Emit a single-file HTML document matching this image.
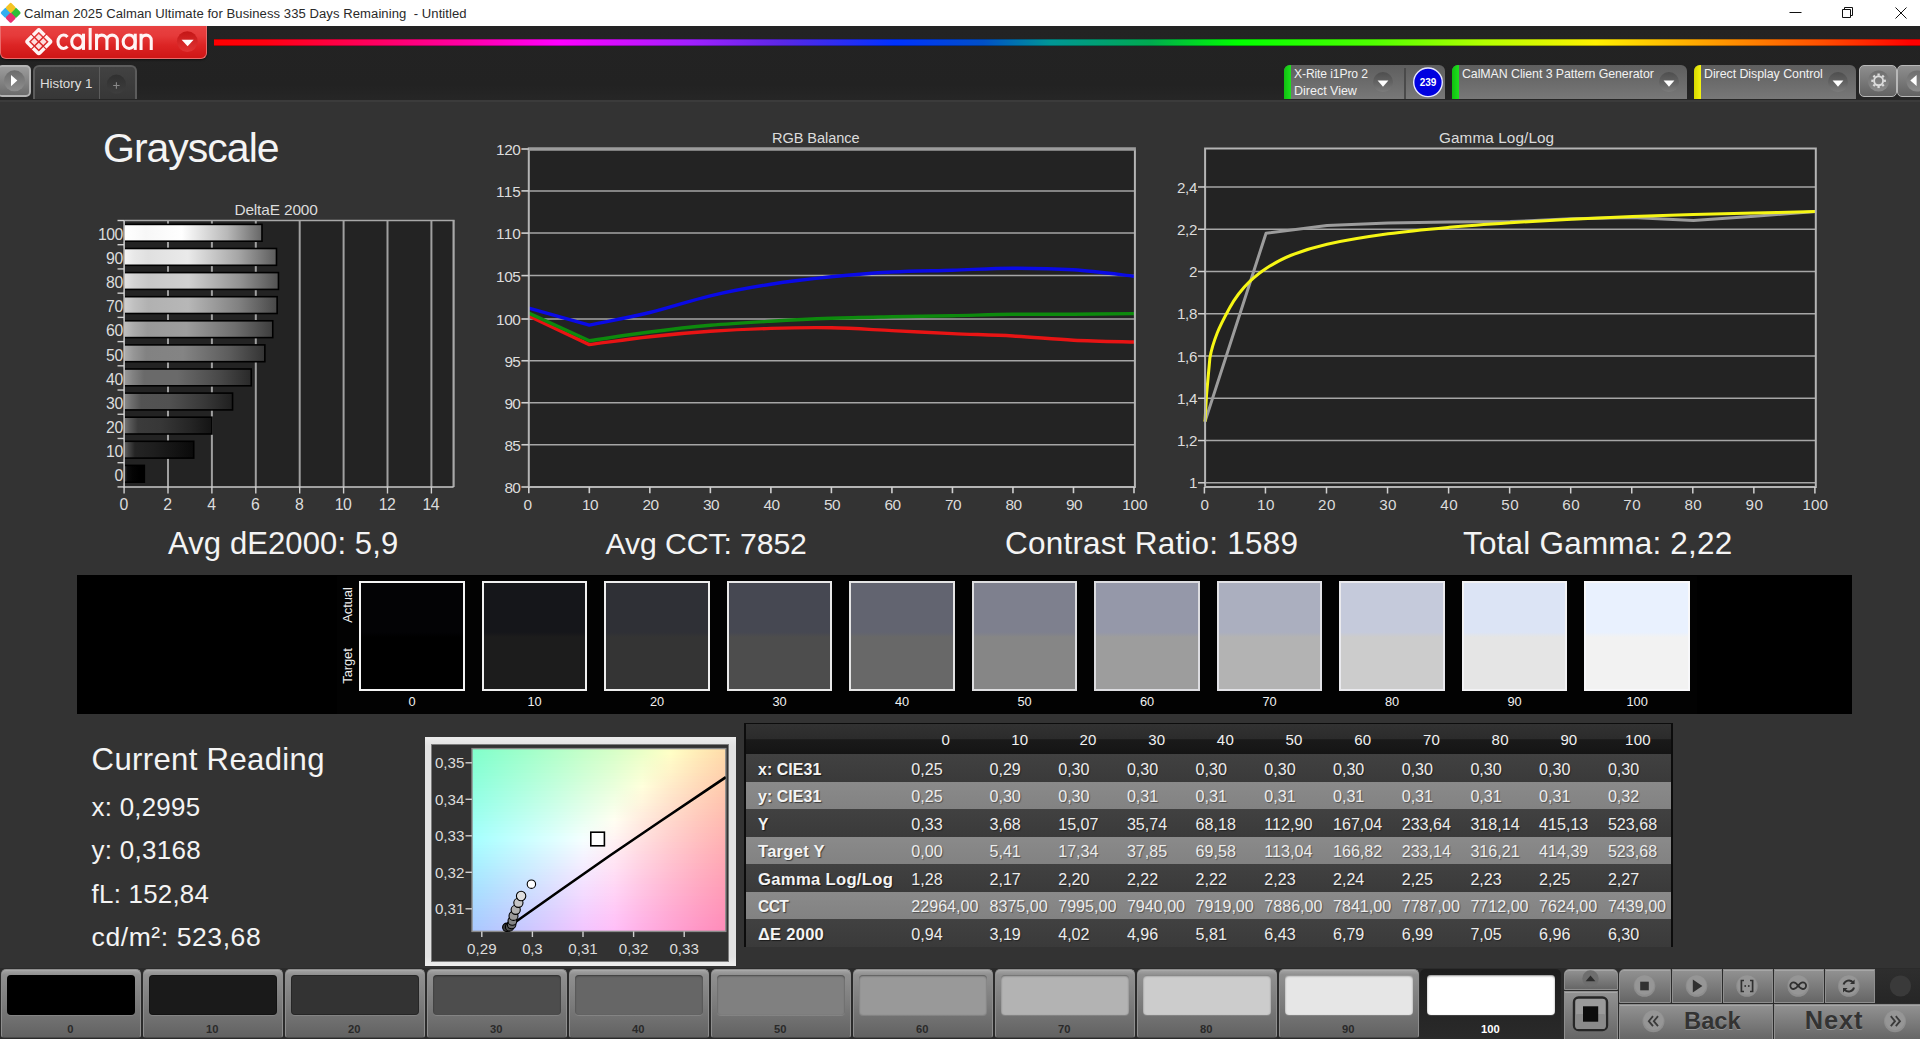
<!DOCTYPE html>
<html><head><meta charset="utf-8"><title>Calman</title>
<style>
html,body{margin:0;padding:0;overflow:hidden;}
html{width:1920px;height:1039px;}
body{width:1920px;height:1039px;overflow:hidden;background:#333;position:relative;font-family:"Liberation Sans",sans-serif;}
.t{position:absolute;white-space:pre;line-height:1;}
.b{position:absolute;box-sizing:border-box;}
svg{position:absolute;left:0;top:0;overflow:visible;}
</style></head><body>

<div class="b" style="left:0px;top:0px;width:1920px;height:26px;background:#fff;"></div>
<svg width="24" height="26"><g transform="translate(10.7,12.8)"><rect x="-3.9" y="-3.9" width="7.8" height="7.8" rx="1.6" transform="translate(-5.0,0) rotate(45)" fill="#32aef0"/><rect x="-3.9" y="-3.9" width="7.8" height="7.8" rx="1.6" transform="translate(5.0,0) rotate(45)" fill="#2fbe38"/><rect x="-3.9" y="-3.9" width="7.8" height="7.8" rx="1.6" transform="translate(0,5.0) rotate(45)" fill="#e8306e"/><rect x="-3.9" y="-3.9" width="7.8" height="7.8" rx="1.6" transform="translate(0,-5.0) rotate(45)" fill="#f4c424"/></g></svg>
<span class="t" style="left:24.00px;top:6px;line-height:15px;font-size:13.09px;color:#2a2a2a;letter-spacing:0.061px;">Calman 2025 Calman Ultimate for Business 335 Days Remaining  - Untitled</span>
<svg width="1920" height="26"><g stroke="#111" stroke-width="1" fill="none"><path d="M1789.5 12.5H1801.5"/><path d="M1842.5 9.5h8v8h-8z M1844.5 9.5v-2h8v8h-2"/><path d="M1895.5 7.5l11 11M1906.5 7.5l-11 11"/></g></svg>
<div class="b" style="left:0px;top:26px;width:1920px;height:74px;background:linear-gradient(#232323,#222 80%,#262626);"></div>
<div class="b" style="left:0px;top:100px;width:1920px;height:1.5px;background:#3b3b3b;"></div>
<div class="b" style="left:0px;top:26px;width:206.8px;height:33.2px;background:linear-gradient(#e84242 0%,#e63a3a 30%,#dc2424 60%,#d01616 100%);border-radius:0 0 6px 6px;border:1px solid #ea6a6a;border-top:none;box-shadow:0 1px 2px rgba(0,0,0,.6);"></div>
<svg width="210" height="60"><g transform="translate(38.8,41.7) rotate(45)"><rect x="-8.65" y="-8.65" width="17.3" height="17.3" rx="1.3" fill="none" stroke="#fff4f4" stroke-width="3.5"/><path d="M-11.5 0H11.5M0 -11.5V11.5" stroke="#d92626" stroke-width="1.2"/><rect x="-5.5" y="-5.5" width="4.75" height="4.75" fill="#ffdede"/><rect x="0.75" y="-5.5" width="4.75" height="4.75" fill="#ffdede"/><rect x="-5.5" y="0.75" width="4.75" height="4.75" fill="#ffdede"/><rect x="0.75" y="0.75" width="4.75" height="4.75" fill="#ffdede"/></g><g fill="none" stroke="#fff4f4" stroke-width="3.05"><path d="M67.5 37.0A5.6 6.75 0 1 0 67.5 46.6"/><ellipse cx="77.45" cy="41.8" rx="5.75" ry="6.75"/><path d="M83.45 33.7V49.9"/><path d="M90.15 28V49.9"/><path d="M96.55 49.9V33.7M96.55 40.3A5.2 5.2 0 0 1 106.95 40.3V49.9M106.95 40.3A5.2 5.2 0 0 1 117.35 40.3V49.9"/><ellipse cx="129.15" cy="41.8" rx="6.0" ry="6.75"/><path d="M135.25 33.7V49.9"/><path d="M141.05 49.9V33.7M141.05 40.2A5.1 5.1 0 0 1 151.25 40.2V49.9"/></g><defs><linearGradient id="ddr" x1="0" x2="0" y1="0" y2="1"><stop offset="0" stop-color="#c41616"/><stop offset="1" stop-color="#e23434"/></linearGradient></defs><circle cx="187.3" cy="41.6" r="10.4" fill="url(#ddr)"/><path d="M181.6 39.8h12l-6 6.4z" fill="#fff"/></svg>
<div class="b" style="left:214px;top:39px;width:1706px;height:7px;background:linear-gradient(90deg,#ff0000 0%,#ff0010 3%,#ff0064 9.7%,#ff00aa 15%,#ff00ff 20.2%,#a020ff 28%,#5a28e6 33.3%,#0032ff 39.9%,#0050c8 45.1%,#009696 49%,#00aa50 54.9%,#00ff00 60%,#50ff00 68%,#b4ff00 74.5%,#fff000 81%,#ffa000 87.6%,#ff5000 94.2%,#ff0000 99.5%);"></div>
<div class="b" style="left:214px;top:39px;width:1706px;height:1px;background:rgba(0,0,0,.25);"></div>
<div class="b" style="left:214px;top:45px;width:1706px;height:1px;background:rgba(0,0,0,.3);"></div>
<div class="b" style="left:-3px;top:65px;width:33.8px;height:31.8px;background:linear-gradient(#9c9c9c,#6c6c6c);border:2px solid #b4b4b4;border-radius:5px;"></div>
<svg width="40" height="100"><defs><linearGradient id="plg" x1="0" x2="0" y1="0" y2="1"><stop offset="0" stop-color="#6c6c6c"/><stop offset="1" stop-color="#8e8e8e"/></linearGradient></defs><circle cx="14.5" cy="80.8" r="10.5" fill="url(#plg)"/><path d="M11 74.9v11.3l6.3-5.65z" fill="#fff"/></svg>
<div class="b" style="left:33px;top:65px;width:104px;height:34.2px;background:linear-gradient(#424242,#373737);border:2px solid #5c5c5c;border-bottom:none;border-radius:6px 6px 0 0;"></div>
<div class="b" style="left:98.6px;top:66px;width:1.6px;height:33px;background:#5c5c5c;"></div>
<span class="t" style="left:40.00px;top:76px;line-height:15px;font-size:13.39px;color:#dedede;letter-spacing:-0.043px;">History 1</span>
<svg width="140" height="100"><defs><linearGradient id="pcg" x1="0" x2="0" y1="0" y2="1"><stop offset="0" stop-color="#303030"/><stop offset="1" stop-color="#3e3e3e"/></linearGradient></defs><circle cx="116.4" cy="84.2" r="9.6" fill="url(#pcg)"/><path d="M113.2 85.5h6.4M116.4 82.3v6.4" stroke="#8a8a8a" stroke-width="1.1"/></svg>
<div class="b" style="left:1284px;top:65px;width:161px;height:33.8px;background:linear-gradient(#5e5e5e,#787878);border-radius:6px 6px 0 0;"></div>
<div class="b" style="left:1284px;top:65px;width:7px;height:33.8px;background:linear-gradient(90deg,#10c010,#1ee01e);border-radius:6px 0 0 0;"></div>
<div class="b" style="left:1404px;top:68px;width:1.5px;height:31.3px;background:#4a4a4a;"></div>
<span class="t" style="left:1294.00px;top:67px;line-height:14px;font-size:12.10px;color:#f2f2f2;letter-spacing:-0.100px;">X-Rite i1Pro 2</span>
<span class="t" style="left:1294.00px;top:84px;line-height:14px;font-size:12.53px;color:#f2f2f2;letter-spacing:-0.015px;">Direct View</span>
<svg width="1920" height="110"><defs><linearGradient id="ddg" x1="0" x2="0" y1="0" y2="1"><stop offset="0" stop-color="#4e4e4e"/><stop offset="0.55" stop-color="#646464"/><stop offset="1" stop-color="#7c7c7c"/></linearGradient></defs><circle cx="1383" cy="82.1" r="10" fill="url(#ddg)"/><path d="M1377.6 80.6h10.8l-5.4 6.1z" fill="#fff"/></svg>
<svg width="1920" height="110"><circle cx="1428" cy="82.3" r="14.3" fill="#0000e0" stroke="#e8e8ff" stroke-width="1.4"/></svg>
<span class="t" style="left:1419.66px;top:77px;line-height:11px;font-size:10.00px;color:#fff;font-weight:700;">239</span>
<div class="b" style="left:1452px;top:65px;width:235px;height:33.8px;background:linear-gradient(#5e5e5e,#787878);border-radius:6px 6px 0 0;"></div>
<div class="b" style="left:1452px;top:65px;width:7px;height:33.8px;background:linear-gradient(90deg,#10c010,#1ee01e);border-radius:6px 0 0 0;"></div>
<span class="t" style="left:1462.00px;top:67px;line-height:14px;font-size:12.35px;color:#f2f2f2;letter-spacing:-0.051px;">CalMAN Client 3 Pattern Generator</span>
<svg width="1920" height="110"><defs><linearGradient id="ddg" x1="0" x2="0" y1="0" y2="1"><stop offset="0" stop-color="#4e4e4e"/><stop offset="0.55" stop-color="#646464"/><stop offset="1" stop-color="#7c7c7c"/></linearGradient></defs><circle cx="1669" cy="82.1" r="10" fill="url(#ddg)"/><path d="M1663.6 80.6h10.8l-5.4 6.1z" fill="#fff"/></svg>
<div class="b" style="left:1694px;top:65px;width:162px;height:33.8px;background:linear-gradient(#5e5e5e,#787878);border-radius:6px 6px 0 0;"></div>
<div class="b" style="left:1694px;top:65px;width:7px;height:33.8px;background:linear-gradient(90deg,#d8d800,#f4f410);border-radius:6px 0 0 0;"></div>
<span class="t" style="left:1704.00px;top:67px;line-height:14px;font-size:12.39px;color:#f2f2f2;letter-spacing:-0.040px;">Direct Display Control</span>
<svg width="1920" height="110"><defs><linearGradient id="ddg" x1="0" x2="0" y1="0" y2="1"><stop offset="0" stop-color="#4e4e4e"/><stop offset="0.55" stop-color="#646464"/><stop offset="1" stop-color="#7c7c7c"/></linearGradient></defs><circle cx="1838" cy="82.1" r="10" fill="url(#ddg)"/><path d="M1832.6 80.6h10.8l-5.4 6.1z" fill="#fff"/></svg>
<div class="b" style="left:1859px;top:64.8px;width:38px;height:32.4px;background:linear-gradient(#8e8e8e,#636363);border:1.5px solid #b8b8b8;border-radius:5px;"></div>
<div class="b" style="left:1897px;top:64.8px;width:38px;height:32.4px;background:linear-gradient(#8e8e8e,#636363);border:1.5px solid #b8b8b8;border-radius:5px;"></div>
<svg width="1920" height="110"><defs><linearGradient id="gcg" x1="0" x2="0" y1="0" y2="1"><stop offset="0" stop-color="#6e6e6e"/><stop offset="1" stop-color="#8c8c8c"/></linearGradient></defs><circle cx="1878.6" cy="81" r="10.6" fill="url(#gcg)"/><circle cx="1917" cy="81" r="10.6" fill="url(#gcg)"/><g transform="translate(1878.6,80.8)" fill="none" stroke="#dcdcdc"><circle r="4.5" stroke-width="1.9"/><path d="M0 -5.2V-7.3" stroke-width="2.3" transform="rotate(0)"/><path d="M0 -5.2V-7.3" stroke-width="2.3" transform="rotate(45)"/><path d="M0 -5.2V-7.3" stroke-width="2.3" transform="rotate(90)"/><path d="M0 -5.2V-7.3" stroke-width="2.3" transform="rotate(135)"/><path d="M0 -5.2V-7.3" stroke-width="2.3" transform="rotate(180)"/><path d="M0 -5.2V-7.3" stroke-width="2.3" transform="rotate(225)"/><path d="M0 -5.2V-7.3" stroke-width="2.3" transform="rotate(270)"/><path d="M0 -5.2V-7.3" stroke-width="2.3" transform="rotate(315)"/></g><path d="M1916.6 74.9v11.2l-6.3-5.6z" fill="#fff"/></svg>
<span class="t" style="left:234.40px;top:201px;line-height:17px;font-size:15.41px;color:#dcdcdc;letter-spacing:-0.134px;">DeltaE 2000</span>
<svg width="1920" height="1039"><defs><linearGradient id="bg0" x1="0" x2="1" y1="0" y2="0"><stop offset="0" stop-color="#ffffff"/><stop offset="0.07" stop-color="#fcfcfc"/><stop offset="0.16" stop-color="#f7f7f7"/><stop offset="0.42" stop-color="#ffffff"/><stop offset="0.75" stop-color="#b8b8b8"/><stop offset="1" stop-color="#666666"/></linearGradient><linearGradient id="bg1" x1="0" x2="1" y1="0" y2="0"><stop offset="0" stop-color="#f5f5f5"/><stop offset="0.07" stop-color="#e8e8e8"/><stop offset="0.16" stop-color="#e0e0e0"/><stop offset="0.42" stop-color="#eaeaea"/><stop offset="0.75" stop-color="#a6a6a6"/><stop offset="1" stop-color="#5c5c5c"/></linearGradient><linearGradient id="bg2" x1="0" x2="1" y1="0" y2="0"><stop offset="0" stop-color="#e3e3e3"/><stop offset="0.07" stop-color="#d3d3d3"/><stop offset="0.16" stop-color="#c8c8c8"/><stop offset="0.42" stop-color="#d0d0d0"/><stop offset="0.75" stop-color="#939393"/><stop offset="1" stop-color="#525252"/></linearGradient><linearGradient id="bg3" x1="0" x2="1" y1="0" y2="0"><stop offset="0" stop-color="#d1d1d1"/><stop offset="0.07" stop-color="#bfbfbf"/><stop offset="0.16" stop-color="#b1b1b1"/><stop offset="0.42" stop-color="#b7b7b7"/><stop offset="0.75" stop-color="#818181"/><stop offset="1" stop-color="#484848"/></linearGradient><linearGradient id="bg4" x1="0" x2="1" y1="0" y2="0"><stop offset="0" stop-color="#bfbfbf"/><stop offset="0.07" stop-color="#aaaaaa"/><stop offset="0.16" stop-color="#999999"/><stop offset="0.42" stop-color="#9d9d9d"/><stop offset="0.75" stop-color="#6e6e6e"/><stop offset="1" stop-color="#3d3d3d"/></linearGradient><linearGradient id="bg5" x1="0" x2="1" y1="0" y2="0"><stop offset="0" stop-color="#aeaeae"/><stop offset="0.07" stop-color="#969696"/><stop offset="0.16" stop-color="#828282"/><stop offset="0.42" stop-color="#848484"/><stop offset="0.75" stop-color="#5c5c5c"/><stop offset="1" stop-color="#333333"/></linearGradient><linearGradient id="bg6" x1="0" x2="1" y1="0" y2="0"><stop offset="0" stop-color="#9b9b9b"/><stop offset="0.07" stop-color="#828282"/><stop offset="0.16" stop-color="#6a6a6a"/><stop offset="0.42" stop-color="#6a6a6a"/><stop offset="0.75" stop-color="#494949"/><stop offset="1" stop-color="#292929"/></linearGradient><linearGradient id="bg7" x1="0" x2="1" y1="0" y2="0"><stop offset="0" stop-color="#8a8a8a"/><stop offset="0.07" stop-color="#6e6e6e"/><stop offset="0.16" stop-color="#535353"/><stop offset="0.42" stop-color="#515151"/><stop offset="0.75" stop-color="#373737"/><stop offset="1" stop-color="#1f1f1f"/></linearGradient><linearGradient id="bg8" x1="0" x2="1" y1="0" y2="0"><stop offset="0" stop-color="#787878"/><stop offset="0.07" stop-color="#595959"/><stop offset="0.16" stop-color="#3b3b3b"/><stop offset="0.42" stop-color="#373737"/><stop offset="0.75" stop-color="#252525"/><stop offset="1" stop-color="#141414"/></linearGradient><linearGradient id="bg9" x1="0" x2="1" y1="0" y2="0"><stop offset="0" stop-color="#666666"/><stop offset="0.07" stop-color="#454545"/><stop offset="0.16" stop-color="#242424"/><stop offset="0.42" stop-color="#1e1e1e"/><stop offset="0.75" stop-color="#131313"/><stop offset="1" stop-color="#0a0a0a"/></linearGradient><linearGradient id="bg10" x1="0" x2="1" y1="0" y2="0"><stop offset="0" stop-color="#545454"/><stop offset="0.07" stop-color="#303030"/><stop offset="0.16" stop-color="#0c0c0c"/><stop offset="0.42" stop-color="#040404"/><stop offset="0.75" stop-color="#000000"/><stop offset="1" stop-color="#000000"/></linearGradient></defs><rect x="124.1" y="220.5" width="329.5" height="266.5" fill="#232323"/><path d="M168.00 220.5V487.0" stroke="#a0a0a0" stroke-width="2"/><path d="M211.90 220.5V487.0" stroke="#a0a0a0" stroke-width="2"/><path d="M255.80 220.5V487.0" stroke="#a0a0a0" stroke-width="2"/><path d="M299.70 220.5V487.0" stroke="#a0a0a0" stroke-width="2"/><path d="M343.60 220.5V487.0" stroke="#a0a0a0" stroke-width="2"/><path d="M387.50 220.5V487.0" stroke="#a0a0a0" stroke-width="2"/><path d="M431.40 220.5V487.0" stroke="#a0a0a0" stroke-width="2"/><rect x="123.69999999999999" y="224.40" width="138.28" height="16.8" fill="url(#bg0)" stroke="#000" stroke-width="1.6"/><rect x="123.69999999999999" y="248.50" width="152.77" height="16.8" fill="url(#bg1)" stroke="#000" stroke-width="1.6"/><rect x="123.69999999999999" y="272.60" width="154.75" height="16.8" fill="url(#bg2)" stroke="#000" stroke-width="1.6"/><rect x="123.69999999999999" y="296.70" width="153.43" height="16.8" fill="url(#bg3)" stroke="#000" stroke-width="1.6"/><rect x="123.69999999999999" y="320.80" width="149.04" height="16.8" fill="url(#bg4)" stroke="#000" stroke-width="1.6"/><rect x="123.69999999999999" y="344.90" width="141.14" height="16.8" fill="url(#bg5)" stroke="#000" stroke-width="1.6"/><rect x="123.69999999999999" y="369.00" width="127.53" height="16.8" fill="url(#bg6)" stroke="#000" stroke-width="1.6"/><rect x="123.69999999999999" y="393.10" width="108.87" height="16.8" fill="url(#bg7)" stroke="#000" stroke-width="1.6"/><rect x="123.69999999999999" y="417.20" width="88.24" height="16.8" fill="url(#bg8)" stroke="#000" stroke-width="1.6"/><rect x="123.69999999999999" y="441.30" width="70.02" height="16.8" fill="url(#bg9)" stroke="#000" stroke-width="1.6"/><rect x="123.69999999999999" y="465.40" width="20.63" height="16.8" fill="url(#bg10)" stroke="#000" stroke-width="1.6"/><path d="M124.1 220.5H454.6" stroke="#a8a8a8" stroke-width="1.5" fill="none"/><path d="M453.6 220.5V487.0" stroke="#a8a8a8" stroke-width="2.2" fill="none"/><path d="M124.1 220.5V487.0H453.6" stroke="#c8c8c8" stroke-width="1.6" fill="none"/><path d="M117.5 220.50H124.1" stroke="#d0d0d0" stroke-width="1.4"/><path d="M117.5 244.72H124.1" stroke="#d0d0d0" stroke-width="1.4"/><path d="M117.5 268.94H124.1" stroke="#d0d0d0" stroke-width="1.4"/><path d="M117.5 293.16H124.1" stroke="#d0d0d0" stroke-width="1.4"/><path d="M117.5 317.38H124.1" stroke="#d0d0d0" stroke-width="1.4"/><path d="M117.5 341.60H124.1" stroke="#d0d0d0" stroke-width="1.4"/><path d="M117.5 365.82H124.1" stroke="#d0d0d0" stroke-width="1.4"/><path d="M117.5 390.04H124.1" stroke="#d0d0d0" stroke-width="1.4"/><path d="M117.5 414.26H124.1" stroke="#d0d0d0" stroke-width="1.4"/><path d="M117.5 438.48H124.1" stroke="#d0d0d0" stroke-width="1.4"/><path d="M117.5 462.70H124.1" stroke="#d0d0d0" stroke-width="1.4"/><path d="M117.5 486.92H124.1" stroke="#d0d0d0" stroke-width="1.4"/><path d="M124.10 487.0V493.5" stroke="#d0d0d0" stroke-width="1.4"/><path d="M168.00 487.0V493.5" stroke="#d0d0d0" stroke-width="1.4"/><path d="M211.90 487.0V493.5" stroke="#d0d0d0" stroke-width="1.4"/><path d="M255.80 487.0V493.5" stroke="#d0d0d0" stroke-width="1.4"/><path d="M299.70 487.0V493.5" stroke="#d0d0d0" stroke-width="1.4"/><path d="M343.60 487.0V493.5" stroke="#d0d0d0" stroke-width="1.4"/><path d="M387.50 487.0V493.5" stroke="#d0d0d0" stroke-width="1.4"/><path d="M431.40 487.0V493.5" stroke="#d0d0d0" stroke-width="1.4"/></svg>
<span class="t" style="left:97.90px;top:226px;line-height:17px;font-size:15.80px;color:#dcdcdc;letter-spacing:-0.481px;">100</span>
<span class="t" style="left:106.10px;top:250px;line-height:17px;font-size:15.80px;color:#dcdcdc;letter-spacing:-0.375px;">90</span>
<span class="t" style="left:106.10px;top:274px;line-height:17px;font-size:15.80px;color:#dcdcdc;letter-spacing:-0.375px;">80</span>
<span class="t" style="left:106.10px;top:298px;line-height:17px;font-size:15.80px;color:#dcdcdc;letter-spacing:-0.375px;">70</span>
<span class="t" style="left:106.10px;top:322px;line-height:17px;font-size:15.80px;color:#dcdcdc;letter-spacing:-0.375px;">60</span>
<span class="t" style="left:106.10px;top:347px;line-height:17px;font-size:15.80px;color:#dcdcdc;letter-spacing:-0.375px;">50</span>
<span class="t" style="left:106.10px;top:371px;line-height:17px;font-size:15.80px;color:#dcdcdc;letter-spacing:-0.375px;">40</span>
<span class="t" style="left:106.10px;top:395px;line-height:17px;font-size:15.80px;color:#dcdcdc;letter-spacing:-0.375px;">30</span>
<span class="t" style="left:106.10px;top:419px;line-height:17px;font-size:15.80px;color:#dcdcdc;letter-spacing:-0.375px;">20</span>
<span class="t" style="left:106.10px;top:443px;line-height:17px;font-size:15.80px;color:#dcdcdc;letter-spacing:-0.375px;">10</span>
<span class="t" style="left:114.51px;top:467px;line-height:17px;font-size:15.80px;color:#dcdcdc;">0</span>
<span class="t" style="left:119.41px;top:496px;line-height:17px;font-size:15.80px;color:#dcdcdc;">0</span>
<span class="t" style="left:163.31px;top:496px;line-height:17px;font-size:15.80px;color:#dcdcdc;">2</span>
<span class="t" style="left:207.21px;top:496px;line-height:17px;font-size:15.80px;color:#dcdcdc;">4</span>
<span class="t" style="left:251.11px;top:496px;line-height:17px;font-size:15.80px;color:#dcdcdc;">6</span>
<span class="t" style="left:295.01px;top:496px;line-height:17px;font-size:15.80px;color:#dcdcdc;">8</span>
<span class="t" style="left:334.80px;top:496px;line-height:17px;font-size:15.80px;color:#dcdcdc;letter-spacing:-0.575px;">10</span>
<span class="t" style="left:378.70px;top:496px;line-height:17px;font-size:15.80px;color:#dcdcdc;letter-spacing:-0.575px;">12</span>
<span class="t" style="left:422.60px;top:496px;line-height:17px;font-size:15.80px;color:#dcdcdc;letter-spacing:-0.575px;">14</span>
<span class="t" style="left:772.00px;top:130px;line-height:16px;font-size:14.59px;color:#dcdcdc;letter-spacing:-0.079px;">RGB Balance</span>
<svg width="1920" height="1039"><rect x="528.8" y="149.4" width="606.1000000000001" height="337.6" fill="#232323"/><path d="M528.8 444.75H1134.9" stroke="#a6a6a6" stroke-width="1.5"/><path d="M528.8 402.75H1134.9" stroke="#a6a6a6" stroke-width="1.5"/><path d="M528.8 360.75H1134.9" stroke="#a6a6a6" stroke-width="1.5"/><path d="M528.8 319.00H1134.9" stroke="#a6a6a6" stroke-width="1.5"/><path d="M528.8 275.60H1134.9" stroke="#a6a6a6" stroke-width="1.5"/><path d="M528.8 233.10H1134.9" stroke="#a6a6a6" stroke-width="1.5"/><path d="M528.8 190.90H1134.9" stroke="#a6a6a6" stroke-width="1.5"/><path d="M528.80 316.00L589.32 344.60C609.49 341.97 629.67 338.92 649.84 336.70C670.01 334.48 690.19 332.68 710.36 331.30C730.53 329.92 750.71 328.98 770.88 328.40C791.05 327.82 811.23 327.43 831.40 327.80C851.57 328.17 871.75 329.63 891.92 330.60C912.09 331.57 932.27 332.70 952.44 333.60C972.61 334.50 992.79 334.90 1012.96 336.00C1033.13 337.10 1053.31 339.20 1073.48 340.20C1093.65 341.20 1123.91 341.70 1134.00 342.00" stroke="#e81414" stroke-width="3.4" fill="none" stroke-linejoin="round"/><path d="M528.80 313.10L589.32 340.70C609.49 337.80 629.67 334.57 649.84 332.00C670.01 329.43 690.19 327.10 710.36 325.30C730.53 323.50 750.71 322.37 770.88 321.20C791.05 320.03 811.23 319.03 831.40 318.30C851.57 317.57 871.75 317.23 891.92 316.80C912.09 316.37 932.27 316.12 952.44 315.70C972.61 315.28 992.79 314.55 1012.96 314.30C1033.13 314.05 1053.31 314.32 1073.48 314.20C1093.65 314.08 1123.91 313.70 1134.00 313.60" stroke="#0d8a0d" stroke-width="3.4" fill="none" stroke-linejoin="round"/><path d="M528.80 308.10L589.32 325.10C609.49 320.90 629.67 317.38 649.84 312.50C670.01 307.62 690.19 300.52 710.36 295.80C730.53 291.08 750.71 287.37 770.88 284.20C791.05 281.03 811.23 278.83 831.40 276.80C851.57 274.77 871.75 273.10 891.92 272.00C912.09 270.90 932.27 270.83 952.44 270.20C972.61 269.57 992.79 268.27 1012.96 268.20C1033.13 268.13 1053.31 268.47 1073.48 269.80C1093.65 271.13 1123.91 275.13 1134.00 276.20" stroke="#0a0ae6" stroke-width="3.4" fill="none" stroke-linejoin="round"/><path d="M528.8 487.0V149.4" stroke="#b4b4b4" stroke-width="2"/><path d="M1134.9 487.0V149.4" stroke="#b4b4b4" stroke-width="2"/><path d="M527.8 487.0H1135.9" stroke="#b4b4b4" stroke-width="2"/><path d="M527.8 149H1135.9" stroke="#9c9c9c" stroke-width="3.4"/><path d="M521.4 487.00H528.8" stroke="#d0d0d0" stroke-width="1.6"/><path d="M521.4 444.75H528.8" stroke="#d0d0d0" stroke-width="1.6"/><path d="M521.4 402.75H528.8" stroke="#d0d0d0" stroke-width="1.6"/><path d="M521.4 360.75H528.8" stroke="#d0d0d0" stroke-width="1.6"/><path d="M521.4 319.00H528.8" stroke="#d0d0d0" stroke-width="1.6"/><path d="M521.4 275.60H528.8" stroke="#d0d0d0" stroke-width="1.6"/><path d="M521.4 233.10H528.8" stroke="#d0d0d0" stroke-width="1.6"/><path d="M521.4 190.90H528.8" stroke="#d0d0d0" stroke-width="1.6"/><path d="M521.4 149.00H528.8" stroke="#d0d0d0" stroke-width="1.6"/><path d="M528.80 487.0V493.2" stroke="#d0d0d0" stroke-width="1.6"/><path d="M589.32 487.0V493.2" stroke="#d0d0d0" stroke-width="1.6"/><path d="M649.84 487.0V493.2" stroke="#d0d0d0" stroke-width="1.6"/><path d="M710.36 487.0V493.2" stroke="#d0d0d0" stroke-width="1.6"/><path d="M770.88 487.0V493.2" stroke="#d0d0d0" stroke-width="1.6"/><path d="M831.40 487.0V493.2" stroke="#d0d0d0" stroke-width="1.6"/><path d="M891.92 487.0V493.2" stroke="#d0d0d0" stroke-width="1.6"/><path d="M952.44 487.0V493.2" stroke="#d0d0d0" stroke-width="1.6"/><path d="M1012.96 487.0V493.2" stroke="#d0d0d0" stroke-width="1.6"/><path d="M1073.48 487.0V493.2" stroke="#d0d0d0" stroke-width="1.6"/><path d="M1134.00 487.0V493.2" stroke="#d0d0d0" stroke-width="1.6"/></svg>
<span class="t" style="left:504.50px;top:479px;line-height:17px;font-size:15.40px;color:#dcdcdc;letter-spacing:-0.730px;">80</span>
<span class="t" style="left:504.50px;top:437px;line-height:17px;font-size:15.40px;color:#dcdcdc;letter-spacing:-0.730px;">85</span>
<span class="t" style="left:504.50px;top:395px;line-height:17px;font-size:15.40px;color:#dcdcdc;letter-spacing:-0.730px;">90</span>
<span class="t" style="left:504.50px;top:353px;line-height:17px;font-size:15.40px;color:#dcdcdc;letter-spacing:-0.730px;">95</span>
<span class="t" style="left:496.10px;top:311px;line-height:17px;font-size:15.40px;color:#dcdcdc;letter-spacing:-0.448px;">100</span>
<span class="t" style="left:496.10px;top:268px;line-height:17px;font-size:15.40px;color:#dcdcdc;letter-spacing:-0.448px;">105</span>
<span class="t" style="left:496.10px;top:225px;line-height:17px;font-size:15.40px;color:#dcdcdc;letter-spacing:0.124px;">110</span>
<span class="t" style="left:496.10px;top:183px;line-height:17px;font-size:15.40px;color:#dcdcdc;letter-spacing:0.124px;">115</span>
<span class="t" style="left:496.10px;top:141px;line-height:17px;font-size:15.40px;color:#dcdcdc;letter-spacing:-0.448px;">120</span>
<span class="t" style="left:523.62px;top:496px;line-height:17px;font-size:15.40px;color:#dcdcdc;">0</span>
<span class="t" style="left:581.92px;top:496px;line-height:17px;font-size:15.40px;color:#dcdcdc;letter-spacing:-0.530px;">10</span>
<span class="t" style="left:642.44px;top:496px;line-height:17px;font-size:15.40px;color:#dcdcdc;letter-spacing:-0.530px;">20</span>
<span class="t" style="left:702.96px;top:496px;line-height:17px;font-size:15.40px;color:#dcdcdc;letter-spacing:-0.530px;">30</span>
<span class="t" style="left:763.48px;top:496px;line-height:17px;font-size:15.40px;color:#dcdcdc;letter-spacing:-0.530px;">40</span>
<span class="t" style="left:824.00px;top:496px;line-height:17px;font-size:15.40px;color:#dcdcdc;letter-spacing:-0.530px;">50</span>
<span class="t" style="left:884.52px;top:496px;line-height:17px;font-size:15.40px;color:#dcdcdc;letter-spacing:-0.530px;">60</span>
<span class="t" style="left:945.04px;top:496px;line-height:17px;font-size:15.40px;color:#dcdcdc;letter-spacing:-0.530px;">70</span>
<span class="t" style="left:1005.56px;top:496px;line-height:17px;font-size:15.40px;color:#dcdcdc;letter-spacing:-0.530px;">80</span>
<span class="t" style="left:1066.08px;top:496px;line-height:17px;font-size:15.40px;color:#dcdcdc;letter-spacing:-0.530px;">90</span>
<span class="t" style="left:1122.15px;top:496px;line-height:17px;font-size:15.40px;color:#dcdcdc;letter-spacing:-0.098px;">100</span>
<span class="t" style="left:1439.00px;top:129px;line-height:17px;font-size:15.29px;color:#dcdcdc;letter-spacing:0.107px;">Gamma Log/Log</span>
<svg width="1920" height="1039"><rect x="1205.0" y="148.3" width="610.5" height="338.7" fill="#232323"/><path d="M1205.0 482.80H1815.5" stroke="#a6a6a6" stroke-width="1.5"/><path d="M1205.0 440.54H1815.5" stroke="#a6a6a6" stroke-width="1.5"/><path d="M1205.0 398.28H1815.5" stroke="#a6a6a6" stroke-width="1.5"/><path d="M1205.0 356.02H1815.5" stroke="#a6a6a6" stroke-width="1.5"/><path d="M1205.0 313.76H1815.5" stroke="#a6a6a6" stroke-width="1.5"/><path d="M1205.0 271.50H1815.5" stroke="#a6a6a6" stroke-width="1.5"/><path d="M1205.0 229.24H1815.5" stroke="#a6a6a6" stroke-width="1.5"/><path d="M1205.0 186.98H1815.5" stroke="#a6a6a6" stroke-width="1.5"/><path d="M1205.00 421.60L1266.05 233.20L1327.10 225.40L1388.15 223.00L1449.20 222.00L1510.25 221.60L1571.30 218.80L1632.35 217.40L1693.40 220.60L1754.45 216.20L1815.50 211.60" stroke="#9c9c9c" stroke-width="3" fill="none" stroke-linejoin="round"/><path d="M1205.00 421.60L1206.53 395.00L1209.88 358.00C1211.66 347.67 1213.95 341.30 1217.21 333.00C1220.47 324.70 1225.86 314.70 1229.42 308.20C1232.98 301.70 1235.22 298.43 1238.58 294.00C1241.94 289.57 1244.99 285.85 1249.57 281.60C1254.15 277.35 1259.23 272.85 1266.05 268.50C1272.87 264.15 1280.30 259.55 1290.47 255.50C1300.64 251.45 1310.82 247.82 1327.10 244.20C1343.38 240.58 1367.80 236.62 1388.15 233.80C1408.50 230.98 1428.85 229.15 1449.20 227.30C1469.55 225.45 1489.90 224.05 1510.25 222.70C1530.60 221.35 1550.95 220.25 1571.30 219.20C1591.65 218.15 1612.00 217.20 1632.35 216.40C1652.70 215.60 1673.05 214.97 1693.40 214.40C1713.75 213.83 1734.10 213.47 1754.45 213.00C1774.80 212.53 1805.33 211.83 1815.50 211.60" stroke="#f6f614" stroke-width="3" fill="none" stroke-linejoin="round"/><path d="M1205.1 148.5V487.0H1815.8V148.5Z" stroke="#b4b4b4" stroke-width="2" fill="none"/><path d="M1198 482.80H1205.0" stroke="#d0d0d0" stroke-width="1.5"/><path d="M1198 440.54H1205.0" stroke="#d0d0d0" stroke-width="1.5"/><path d="M1198 398.28H1205.0" stroke="#d0d0d0" stroke-width="1.5"/><path d="M1198 356.02H1205.0" stroke="#d0d0d0" stroke-width="1.5"/><path d="M1198 313.76H1205.0" stroke="#d0d0d0" stroke-width="1.5"/><path d="M1198 271.50H1205.0" stroke="#d0d0d0" stroke-width="1.5"/><path d="M1198 229.24H1205.0" stroke="#d0d0d0" stroke-width="1.5"/><path d="M1198 186.98H1205.0" stroke="#d0d0d0" stroke-width="1.5"/><path d="M1204.40 487.0V493.5" stroke="#d0d0d0" stroke-width="1.5"/><path d="M1265.45 487.0V493.5" stroke="#d0d0d0" stroke-width="1.5"/><path d="M1326.50 487.0V493.5" stroke="#d0d0d0" stroke-width="1.5"/><path d="M1387.55 487.0V493.5" stroke="#d0d0d0" stroke-width="1.5"/><path d="M1448.60 487.0V493.5" stroke="#d0d0d0" stroke-width="1.5"/><path d="M1509.65 487.0V493.5" stroke="#d0d0d0" stroke-width="1.5"/><path d="M1570.70 487.0V493.5" stroke="#d0d0d0" stroke-width="1.5"/><path d="M1631.75 487.0V493.5" stroke="#d0d0d0" stroke-width="1.5"/><path d="M1692.80 487.0V493.5" stroke="#d0d0d0" stroke-width="1.5"/><path d="M1753.85 487.0V493.5" stroke="#d0d0d0" stroke-width="1.5"/><path d="M1814.90 487.0V493.5" stroke="#d0d0d0" stroke-width="1.5"/></svg>
<span class="t" style="left:1189.05px;top:474px;line-height:17px;font-size:15.20px;color:#dcdcdc;">1</span>
<span class="t" style="left:1176.90px;top:432px;line-height:17px;font-size:15.20px;color:#dcdcdc;letter-spacing:-0.265px;">1,2</span>
<span class="t" style="left:1176.90px;top:390px;line-height:17px;font-size:15.20px;color:#dcdcdc;letter-spacing:-0.265px;">1,4</span>
<span class="t" style="left:1176.90px;top:348px;line-height:17px;font-size:15.20px;color:#dcdcdc;letter-spacing:-0.265px;">1,6</span>
<span class="t" style="left:1176.90px;top:305px;line-height:17px;font-size:15.20px;color:#dcdcdc;letter-spacing:-0.265px;">1,8</span>
<span class="t" style="left:1189.05px;top:263px;line-height:17px;font-size:15.20px;color:#dcdcdc;">2</span>
<span class="t" style="left:1176.90px;top:221px;line-height:17px;font-size:15.20px;color:#dcdcdc;letter-spacing:-0.265px;">2,2</span>
<span class="t" style="left:1176.90px;top:179px;line-height:17px;font-size:15.20px;color:#dcdcdc;letter-spacing:-0.265px;">2,4</span>
<span class="t" style="left:1200.47px;top:496px;line-height:17px;font-size:15.20px;color:#dcdcdc;">0</span>
<span class="t" style="left:1257.05px;top:496px;line-height:17px;font-size:15.20px;color:#dcdcdc;letter-spacing:0.492px;">10</span>
<span class="t" style="left:1318.10px;top:496px;line-height:17px;font-size:15.20px;color:#dcdcdc;letter-spacing:0.492px;">20</span>
<span class="t" style="left:1379.15px;top:496px;line-height:17px;font-size:15.20px;color:#dcdcdc;letter-spacing:0.492px;">30</span>
<span class="t" style="left:1440.20px;top:496px;line-height:17px;font-size:15.20px;color:#dcdcdc;letter-spacing:0.492px;">40</span>
<span class="t" style="left:1501.25px;top:496px;line-height:17px;font-size:15.20px;color:#dcdcdc;letter-spacing:0.492px;">50</span>
<span class="t" style="left:1562.30px;top:496px;line-height:17px;font-size:15.20px;color:#dcdcdc;letter-spacing:0.492px;">60</span>
<span class="t" style="left:1623.35px;top:496px;line-height:17px;font-size:15.20px;color:#dcdcdc;letter-spacing:0.492px;">70</span>
<span class="t" style="left:1684.40px;top:496px;line-height:17px;font-size:15.20px;color:#dcdcdc;letter-spacing:0.492px;">80</span>
<span class="t" style="left:1745.45px;top:496px;line-height:17px;font-size:15.20px;color:#dcdcdc;letter-spacing:0.492px;">90</span>
<span class="t" style="left:1802.45px;top:496px;line-height:17px;font-size:15.20px;color:#dcdcdc;letter-spacing:0.069px;">100</span>
<span class="t" style="left:103.00px;top:125px;line-height:46px;font-size:41.00px;color:#f4f4f4;letter-spacing:-0.996px;">Grayscale</span>
<span class="t" style="left:168.00px;top:526px;line-height:35px;font-size:31.02px;color:#f4f4f4;letter-spacing:0.097px;">Avg dE2000: 5,9</span>
<span class="t" style="left:605.60px;top:527px;line-height:33px;font-size:30.19px;color:#f4f4f4;letter-spacing:-0.098px;">Avg CCT: 7852</span>
<span class="t" style="left:1005.00px;top:525px;line-height:36px;font-size:31.54px;color:#f4f4f4;letter-spacing:0.198px;">Contrast Ratio: 1589</span>
<span class="t" style="left:1463.00px;top:526px;line-height:35px;font-size:31.49px;color:#f4f4f4;letter-spacing:0.205px;">Total Gamma: 2,22</span>
<div class="b" style="left:77px;top:575px;width:1775px;height:139px;background:#000;"></div>
<div class="b" style="left:337px;top:576px;width:1360px;height:138px;background:#020202;"></div>
<div class="b" style="left:359.2px;top:581px;width:105.8px;height:109.6px;background:linear-gradient(#030305 0%,#030305 46.5%,#000000 51%,#000000 100%);border:2px solid #f4f4f4;"></div>
<span class="t" style="left:408.54px;top:694px;line-height:15px;font-size:12.80px;color:#f0f0f0;">0</span>
<div class="b" style="left:481.7px;top:581px;width:105.8px;height:109.6px;background:linear-gradient(#15161a 0%,#15161a 46.5%,#1c1c1c 51%,#1c1c1c 100%);border:2px solid #f0f0f0;"></div>
<span class="t" style="left:527.48px;top:694px;line-height:15px;font-size:12.80px;color:#f0f0f0;">10</span>
<div class="b" style="left:604.2px;top:581px;width:105.8px;height:109.6px;background:linear-gradient(#2f3036 0%,#2f3036 46.5%,#343434 51%,#343434 100%);border:2px solid #eeeeee;"></div>
<span class="t" style="left:649.98px;top:694px;line-height:15px;font-size:12.80px;color:#f0f0f0;">20</span>
<div class="b" style="left:726.7px;top:581px;width:105.8px;height:109.6px;background:linear-gradient(#464852 0%,#464852 46.5%,#4d4d4d 51%,#4d4d4d 100%);border:2px solid #e8e8e8;"></div>
<span class="t" style="left:772.48px;top:694px;line-height:15px;font-size:12.80px;color:#f0f0f0;">30</span>
<div class="b" style="left:849.2px;top:581px;width:105.8px;height:109.6px;background:linear-gradient(#626470 0%,#626470 46.5%,#686868 51%,#686868 100%);border:2px solid #e4e4e4;"></div>
<span class="t" style="left:894.98px;top:694px;line-height:15px;font-size:12.80px;color:#f0f0f0;">40</span>
<div class="b" style="left:971.7px;top:581px;width:105.8px;height:109.6px;background:linear-gradient(#7e808e 0%,#7e808e 46.5%,#868686 51%,#868686 100%);border:2px solid #dedee0;"></div>
<span class="t" style="left:1017.48px;top:694px;line-height:15px;font-size:12.80px;color:#f0f0f0;">50</span>
<div class="b" style="left:1094.2px;top:581px;width:105.8px;height:109.6px;background:linear-gradient(#9598a9 0%,#9598a9 46.5%,#9d9d9d 51%,#9d9d9d 100%);border:2px solid #dcdce0;"></div>
<span class="t" style="left:1139.98px;top:694px;line-height:15px;font-size:12.80px;color:#f0f0f0;">60</span>
<div class="b" style="left:1216.7px;top:581px;width:105.8px;height:109.6px;background:linear-gradient(#abafbf 0%,#abafbf 46.5%,#b3b3b3 51%,#b3b3b3 100%);border:2px solid #e2e2e6;"></div>
<span class="t" style="left:1262.48px;top:694px;line-height:15px;font-size:12.80px;color:#f0f0f0;">70</span>
<div class="b" style="left:1339.2px;top:581px;width:105.8px;height:109.6px;background:linear-gradient(#c5cadb 0%,#c5cadb 46.5%,#cccccc 51%,#cccccc 100%);border:2px solid #eaeaee;"></div>
<span class="t" style="left:1384.98px;top:694px;line-height:15px;font-size:12.80px;color:#f0f0f0;">80</span>
<div class="b" style="left:1461.7px;top:581px;width:105.8px;height:109.6px;background:linear-gradient(#dce4f5 0%,#dce4f5 46.5%,#e5e5e5 51%,#e5e5e5 100%);border:2px solid #f2f2f4;"></div>
<span class="t" style="left:1507.48px;top:694px;line-height:15px;font-size:12.80px;color:#f0f0f0;">90</span>
<div class="b" style="left:1584.2px;top:581px;width:105.8px;height:109.6px;background:linear-gradient(#e9f1fe 0%,#e9f1fe 46.5%,#f2f2f2 51%,#f2f2f2 100%);border:2px solid #f8f8fa;"></div>
<span class="t" style="left:1626.42px;top:694px;line-height:15px;font-size:12.80px;color:#f0f0f0;">100</span>
<span class="t" style="left:346.7px;top:605.2px;font-size:13px;color:#f0f0f0;transform:translate(-50%,-50%) rotate(-90deg);letter-spacing:-0.1px;">Actual</span>
<span class="t" style="left:346.7px;top:666.2px;font-size:13px;color:#f0f0f0;transform:translate(-50%,-50%) rotate(-90deg);letter-spacing:-0.1px;">Target</span>
<span class="t" style="left:91.60px;top:742px;line-height:35px;font-size:31.08px;color:#f4f4f4;letter-spacing:0.345px;">Current Reading</span>
<span class="t" style="left:91.60px;top:793px;line-height:28px;font-size:25.89px;color:#f4f4f4;letter-spacing:0.248px;">x: 0,2995</span>
<span class="t" style="left:91.60px;top:835px;line-height:30px;font-size:26.01px;color:#f4f4f4;letter-spacing:0.275px;">y: 0,3168</span>
<span class="t" style="left:91.60px;top:880px;line-height:28px;font-size:25.89px;color:#f4f4f4;letter-spacing:0.238px;">fL: 152,84</span>
<span class="t" style="left:91.60px;top:922px;line-height:30px;font-size:26.54px;color:#f4f4f4;letter-spacing:0.571px;">cd/m²: 523,68</span>
<div class="b" style="left:424.8px;top:737.1px;width:311.2px;height:228.9px;background:linear-gradient(#ececec,#e2e2e2 4%,#e2e2e2 96%,#eeeeee);"></div>
<div class="b" style="left:432.2px;top:745.2px;width:296.1px;height:215.7px;background:#323232;box-shadow:0 0 0 1px rgba(40,40,40,.55);"></div>
<svg width="1920" height="1039"><defs><linearGradient id="c0" x1="0" x2="1" y1="0" y2="0"><stop offset="0.00" stop-color="#81ffcb"/><stop offset="0.11" stop-color="#91ffca"/><stop offset="0.22" stop-color="#a1ffca"/><stop offset="0.33" stop-color="#b2ffc9"/><stop offset="0.44" stop-color="#c4ffc8"/><stop offset="0.56" stop-color="#d7ffc7"/><stop offset="0.67" stop-color="#eaffc7"/><stop offset="0.78" stop-color="#feffc6"/><stop offset="0.89" stop-color="#ffedb7"/><stop offset="1.00" stop-color="#ffdca9"/></linearGradient><linearGradient id="c1" x1="0" x2="1" y1="0" y2="0"><stop offset="0.00" stop-color="#82ffcd"/><stop offset="0.11" stop-color="#92ffcc"/><stop offset="0.22" stop-color="#a2ffcb"/><stop offset="0.33" stop-color="#b4ffcb"/><stop offset="0.44" stop-color="#c6ffca"/><stop offset="0.56" stop-color="#d8ffc9"/><stop offset="0.67" stop-color="#ebffc8"/><stop offset="0.78" stop-color="#ffffc7"/><stop offset="0.89" stop-color="#ffebb7"/><stop offset="1.00" stop-color="#ffdaa9"/></linearGradient><linearGradient id="c2" x1="0" x2="1" y1="0" y2="0"><stop offset="0.00" stop-color="#83ffce"/><stop offset="0.11" stop-color="#93ffce"/><stop offset="0.22" stop-color="#a4ffcd"/><stop offset="0.33" stop-color="#b5ffcc"/><stop offset="0.44" stop-color="#c7ffcb"/><stop offset="0.56" stop-color="#daffcb"/><stop offset="0.67" stop-color="#edffca"/><stop offset="0.78" stop-color="#fffdc7"/><stop offset="0.89" stop-color="#ffeab8"/><stop offset="1.00" stop-color="#ffd9aa"/></linearGradient><linearGradient id="c3" x1="0" x2="1" y1="0" y2="0"><stop offset="0.00" stop-color="#84ffd0"/><stop offset="0.11" stop-color="#94ffcf"/><stop offset="0.22" stop-color="#a5ffcf"/><stop offset="0.33" stop-color="#b6ffce"/><stop offset="0.44" stop-color="#c9ffcd"/><stop offset="0.56" stop-color="#dbffcc"/><stop offset="0.67" stop-color="#efffcc"/><stop offset="0.78" stop-color="#fffbc8"/><stop offset="0.89" stop-color="#ffe8b8"/><stop offset="1.00" stop-color="#ffd7aa"/></linearGradient><linearGradient id="c4" x1="0" x2="1" y1="0" y2="0"><stop offset="0.00" stop-color="#85ffd1"/><stop offset="0.11" stop-color="#95ffd1"/><stop offset="0.22" stop-color="#a6ffd0"/><stop offset="0.33" stop-color="#b8ffcf"/><stop offset="0.44" stop-color="#caffcf"/><stop offset="0.56" stop-color="#ddffce"/><stop offset="0.67" stop-color="#f1ffcd"/><stop offset="0.78" stop-color="#fff9c8"/><stop offset="0.89" stop-color="#ffe6b8"/><stop offset="1.00" stop-color="#ffd6aa"/></linearGradient><linearGradient id="c5" x1="0" x2="1" y1="0" y2="0"><stop offset="0.00" stop-color="#86ffd3"/><stop offset="0.11" stop-color="#97ffd2"/><stop offset="0.22" stop-color="#a8ffd2"/><stop offset="0.33" stop-color="#b9ffd1"/><stop offset="0.44" stop-color="#ccffd0"/><stop offset="0.56" stop-color="#dfffd0"/><stop offset="0.67" stop-color="#f2ffcf"/><stop offset="0.78" stop-color="#fff7c8"/><stop offset="0.89" stop-color="#ffe5b9"/><stop offset="1.00" stop-color="#ffd4ab"/></linearGradient><linearGradient id="c6" x1="0" x2="1" y1="0" y2="0"><stop offset="0.00" stop-color="#87ffd5"/><stop offset="0.11" stop-color="#98ffd4"/><stop offset="0.22" stop-color="#a9ffd3"/><stop offset="0.33" stop-color="#bbffd3"/><stop offset="0.44" stop-color="#cdffd2"/><stop offset="0.56" stop-color="#e0ffd1"/><stop offset="0.67" stop-color="#f4ffd1"/><stop offset="0.78" stop-color="#fff6c8"/><stop offset="0.89" stop-color="#ffe3b9"/><stop offset="1.00" stop-color="#ffd3ab"/></linearGradient><linearGradient id="c7" x1="0" x2="1" y1="0" y2="0"><stop offset="0.00" stop-color="#88ffd6"/><stop offset="0.11" stop-color="#99ffd6"/><stop offset="0.22" stop-color="#aaffd5"/><stop offset="0.33" stop-color="#bcffd4"/><stop offset="0.44" stop-color="#cfffd4"/><stop offset="0.56" stop-color="#e2ffd3"/><stop offset="0.67" stop-color="#f6ffd3"/><stop offset="0.78" stop-color="#fff4c9"/><stop offset="0.89" stop-color="#ffe2b9"/><stop offset="1.00" stop-color="#ffd1ab"/></linearGradient><linearGradient id="c8" x1="0" x2="1" y1="0" y2="0"><stop offset="0.00" stop-color="#8affd8"/><stop offset="0.11" stop-color="#9affd7"/><stop offset="0.22" stop-color="#acffd7"/><stop offset="0.33" stop-color="#beffd6"/><stop offset="0.44" stop-color="#d0ffd6"/><stop offset="0.56" stop-color="#e4ffd5"/><stop offset="0.67" stop-color="#f8ffd4"/><stop offset="0.78" stop-color="#fff2c9"/><stop offset="0.89" stop-color="#ffe0b9"/><stop offset="1.00" stop-color="#ffd0ab"/></linearGradient><linearGradient id="c9" x1="0" x2="1" y1="0" y2="0"><stop offset="0.00" stop-color="#8bffd9"/><stop offset="0.11" stop-color="#9cffd9"/><stop offset="0.22" stop-color="#adffd8"/><stop offset="0.33" stop-color="#bfffd8"/><stop offset="0.44" stop-color="#d2ffd7"/><stop offset="0.56" stop-color="#e5ffd7"/><stop offset="0.67" stop-color="#f9ffd6"/><stop offset="0.78" stop-color="#fff0c9"/><stop offset="0.89" stop-color="#ffdeba"/><stop offset="1.00" stop-color="#ffceac"/></linearGradient><linearGradient id="c10" x1="0" x2="1" y1="0" y2="0"><stop offset="0.00" stop-color="#8cffdb"/><stop offset="0.11" stop-color="#9dffdb"/><stop offset="0.22" stop-color="#aeffda"/><stop offset="0.33" stop-color="#c0ffda"/><stop offset="0.44" stop-color="#d3ffd9"/><stop offset="0.56" stop-color="#e7ffd9"/><stop offset="0.67" stop-color="#fbffd8"/><stop offset="0.78" stop-color="#ffefca"/><stop offset="0.89" stop-color="#ffddba"/><stop offset="1.00" stop-color="#ffcdac"/></linearGradient><linearGradient id="c11" x1="0" x2="1" y1="0" y2="0"><stop offset="0.00" stop-color="#8dffdd"/><stop offset="0.11" stop-color="#9effdc"/><stop offset="0.22" stop-color="#b0ffdc"/><stop offset="0.33" stop-color="#c2ffdb"/><stop offset="0.44" stop-color="#d5ffdb"/><stop offset="0.56" stop-color="#e9ffda"/><stop offset="0.67" stop-color="#fdffda"/><stop offset="0.78" stop-color="#ffedca"/><stop offset="0.89" stop-color="#ffdbba"/><stop offset="1.00" stop-color="#ffcbac"/></linearGradient><linearGradient id="c12" x1="0" x2="1" y1="0" y2="0"><stop offset="0.00" stop-color="#8effde"/><stop offset="0.11" stop-color="#9fffde"/><stop offset="0.22" stop-color="#b1ffde"/><stop offset="0.33" stop-color="#c3ffdd"/><stop offset="0.44" stop-color="#d7ffdd"/><stop offset="0.56" stop-color="#eaffdc"/><stop offset="0.67" stop-color="#ffffdc"/><stop offset="0.78" stop-color="#ffebca"/><stop offset="0.89" stop-color="#ffdaba"/><stop offset="1.00" stop-color="#ffcaad"/></linearGradient><linearGradient id="c13" x1="0" x2="1" y1="0" y2="0"><stop offset="0.00" stop-color="#90ffe0"/><stop offset="0.11" stop-color="#a1ffe0"/><stop offset="0.22" stop-color="#b2ffdf"/><stop offset="0.33" stop-color="#c5ffdf"/><stop offset="0.44" stop-color="#d8ffde"/><stop offset="0.56" stop-color="#ecffde"/><stop offset="0.67" stop-color="#fffddc"/><stop offset="0.78" stop-color="#ffe9ca"/><stop offset="0.89" stop-color="#ffd8bb"/><stop offset="1.00" stop-color="#ffc9ad"/></linearGradient><linearGradient id="c14" x1="0" x2="1" y1="0" y2="0"><stop offset="0.00" stop-color="#91ffe2"/><stop offset="0.11" stop-color="#a2ffe2"/><stop offset="0.22" stop-color="#b4ffe1"/><stop offset="0.33" stop-color="#c7ffe1"/><stop offset="0.44" stop-color="#daffe0"/><stop offset="0.56" stop-color="#eeffe0"/><stop offset="0.67" stop-color="#fffbdc"/><stop offset="0.78" stop-color="#ffe8cb"/><stop offset="0.89" stop-color="#ffd7bb"/><stop offset="1.00" stop-color="#ffc7ad"/></linearGradient><linearGradient id="c15" x1="0" x2="1" y1="0" y2="0"><stop offset="0.00" stop-color="#92ffe4"/><stop offset="0.11" stop-color="#a3ffe3"/><stop offset="0.22" stop-color="#b5ffe3"/><stop offset="0.33" stop-color="#c8ffe2"/><stop offset="0.44" stop-color="#dcffe2"/><stop offset="0.56" stop-color="#f0ffe2"/><stop offset="0.67" stop-color="#fff9dc"/><stop offset="0.78" stop-color="#ffe6cb"/><stop offset="0.89" stop-color="#ffd5bb"/><stop offset="1.00" stop-color="#ffc6ad"/></linearGradient><linearGradient id="c16" x1="0" x2="1" y1="0" y2="0"><stop offset="0.00" stop-color="#93ffe5"/><stop offset="0.11" stop-color="#a5ffe5"/><stop offset="0.22" stop-color="#b7ffe5"/><stop offset="0.33" stop-color="#caffe4"/><stop offset="0.44" stop-color="#ddffe4"/><stop offset="0.56" stop-color="#f2ffe4"/><stop offset="0.67" stop-color="#fff8dc"/><stop offset="0.78" stop-color="#ffe4cb"/><stop offset="0.89" stop-color="#ffd3bc"/><stop offset="1.00" stop-color="#ffc4ae"/></linearGradient><linearGradient id="c17" x1="0" x2="1" y1="0" y2="0"><stop offset="0.00" stop-color="#94ffe7"/><stop offset="0.11" stop-color="#a6ffe7"/><stop offset="0.22" stop-color="#b8ffe6"/><stop offset="0.33" stop-color="#cbffe6"/><stop offset="0.44" stop-color="#dfffe6"/><stop offset="0.56" stop-color="#f3ffe5"/><stop offset="0.67" stop-color="#fff6dd"/><stop offset="0.78" stop-color="#ffe3cb"/><stop offset="0.89" stop-color="#ffd2bc"/><stop offset="1.00" stop-color="#ffc3ae"/></linearGradient><linearGradient id="c18" x1="0" x2="1" y1="0" y2="0"><stop offset="0.00" stop-color="#96ffe9"/><stop offset="0.11" stop-color="#a7ffe9"/><stop offset="0.22" stop-color="#baffe8"/><stop offset="0.33" stop-color="#cdffe8"/><stop offset="0.44" stop-color="#e1ffe8"/><stop offset="0.56" stop-color="#f5ffe7"/><stop offset="0.67" stop-color="#fff4dd"/><stop offset="0.78" stop-color="#ffe1cc"/><stop offset="0.89" stop-color="#ffd0bc"/><stop offset="1.00" stop-color="#ffc1ae"/></linearGradient><linearGradient id="c19" x1="0" x2="1" y1="0" y2="0"><stop offset="0.00" stop-color="#97ffeb"/><stop offset="0.11" stop-color="#a9ffea"/><stop offset="0.22" stop-color="#bbffea"/><stop offset="0.33" stop-color="#ceffea"/><stop offset="0.44" stop-color="#e2ffea"/><stop offset="0.56" stop-color="#f7ffe9"/><stop offset="0.67" stop-color="#fff2dd"/><stop offset="0.78" stop-color="#ffdfcc"/><stop offset="0.89" stop-color="#ffcfbc"/><stop offset="1.00" stop-color="#ffc0af"/></linearGradient><linearGradient id="c20" x1="0" x2="1" y1="0" y2="0"><stop offset="0.00" stop-color="#98ffed"/><stop offset="0.11" stop-color="#aaffec"/><stop offset="0.22" stop-color="#bdffec"/><stop offset="0.33" stop-color="#d0ffec"/><stop offset="0.44" stop-color="#e4ffeb"/><stop offset="0.56" stop-color="#f9ffeb"/><stop offset="0.67" stop-color="#fff0dd"/><stop offset="0.78" stop-color="#ffdecc"/><stop offset="0.89" stop-color="#ffcdbd"/><stop offset="1.00" stop-color="#ffbfaf"/></linearGradient><linearGradient id="c21" x1="0" x2="1" y1="0" y2="0"><stop offset="0.00" stop-color="#9affee"/><stop offset="0.11" stop-color="#acffee"/><stop offset="0.22" stop-color="#beffee"/><stop offset="0.33" stop-color="#d2ffee"/><stop offset="0.44" stop-color="#e6ffed"/><stop offset="0.56" stop-color="#fbffed"/><stop offset="0.67" stop-color="#ffeede"/><stop offset="0.78" stop-color="#ffdccc"/><stop offset="0.89" stop-color="#ffccbd"/><stop offset="1.00" stop-color="#ffbdaf"/></linearGradient><linearGradient id="c22" x1="0" x2="1" y1="0" y2="0"><stop offset="0.00" stop-color="#9bfff0"/><stop offset="0.11" stop-color="#adfff0"/><stop offset="0.22" stop-color="#c0fff0"/><stop offset="0.33" stop-color="#d3fff0"/><stop offset="0.44" stop-color="#e8ffef"/><stop offset="0.56" stop-color="#fdffef"/><stop offset="0.67" stop-color="#ffedde"/><stop offset="0.78" stop-color="#ffdbcd"/><stop offset="0.89" stop-color="#ffcabd"/><stop offset="1.00" stop-color="#ffbcaf"/></linearGradient><linearGradient id="c23" x1="0" x2="1" y1="0" y2="0"><stop offset="0.00" stop-color="#9cfff2"/><stop offset="0.11" stop-color="#aefff2"/><stop offset="0.22" stop-color="#c1fff2"/><stop offset="0.33" stop-color="#d5fff2"/><stop offset="0.44" stop-color="#e9fff1"/><stop offset="0.56" stop-color="#fffff1"/><stop offset="0.67" stop-color="#ffebde"/><stop offset="0.78" stop-color="#ffd9cd"/><stop offset="0.89" stop-color="#ffc9bd"/><stop offset="1.00" stop-color="#ffbab0"/></linearGradient><linearGradient id="c24" x1="0" x2="1" y1="0" y2="0"><stop offset="0.00" stop-color="#9efff4"/><stop offset="0.11" stop-color="#b0fff4"/><stop offset="0.22" stop-color="#c3fff4"/><stop offset="0.33" stop-color="#d7fff3"/><stop offset="0.44" stop-color="#ebfff3"/><stop offset="0.56" stop-color="#fffdf2"/><stop offset="0.67" stop-color="#ffe9de"/><stop offset="0.78" stop-color="#ffd7cd"/><stop offset="0.89" stop-color="#ffc7be"/><stop offset="1.00" stop-color="#ffb9b0"/></linearGradient><linearGradient id="c25" x1="0" x2="1" y1="0" y2="0"><stop offset="0.00" stop-color="#9ffff6"/><stop offset="0.11" stop-color="#b1fff6"/><stop offset="0.22" stop-color="#c4fff6"/><stop offset="0.33" stop-color="#d8fff5"/><stop offset="0.44" stop-color="#edfff5"/><stop offset="0.56" stop-color="#fffcf2"/><stop offset="0.67" stop-color="#ffe7de"/><stop offset="0.78" stop-color="#ffd6cd"/><stop offset="0.89" stop-color="#ffc6be"/><stop offset="1.00" stop-color="#ffb8b0"/></linearGradient><linearGradient id="c26" x1="0" x2="1" y1="0" y2="0"><stop offset="0.00" stop-color="#a0fff8"/><stop offset="0.11" stop-color="#b3fff8"/><stop offset="0.22" stop-color="#c6fff8"/><stop offset="0.33" stop-color="#dafff7"/><stop offset="0.44" stop-color="#effff7"/><stop offset="0.56" stop-color="#fffaf2"/><stop offset="0.67" stop-color="#ffe6df"/><stop offset="0.78" stop-color="#ffd4ce"/><stop offset="0.89" stop-color="#ffc4be"/><stop offset="1.00" stop-color="#ffb6b1"/></linearGradient><linearGradient id="c27" x1="0" x2="1" y1="0" y2="0"><stop offset="0.00" stop-color="#a2fffa"/><stop offset="0.11" stop-color="#b4fffa"/><stop offset="0.22" stop-color="#c8fffa"/><stop offset="0.33" stop-color="#dcfff9"/><stop offset="0.44" stop-color="#f1fff9"/><stop offset="0.56" stop-color="#fff8f2"/><stop offset="0.67" stop-color="#ffe4df"/><stop offset="0.78" stop-color="#ffd2ce"/><stop offset="0.89" stop-color="#ffc3be"/><stop offset="1.00" stop-color="#ffb5b1"/></linearGradient><linearGradient id="c28" x1="0" x2="1" y1="0" y2="0"><stop offset="0.00" stop-color="#a3fffc"/><stop offset="0.11" stop-color="#b6fffc"/><stop offset="0.22" stop-color="#c9fffc"/><stop offset="0.33" stop-color="#ddfffc"/><stop offset="0.44" stop-color="#f3fffc"/><stop offset="0.56" stop-color="#fff6f2"/><stop offset="0.67" stop-color="#ffe2df"/><stop offset="0.78" stop-color="#ffd1ce"/><stop offset="0.89" stop-color="#ffc1bf"/><stop offset="1.00" stop-color="#ffb4b1"/></linearGradient><linearGradient id="c29" x1="0" x2="1" y1="0" y2="0"><stop offset="0.00" stop-color="#a4fffe"/><stop offset="0.11" stop-color="#b7fffe"/><stop offset="0.22" stop-color="#cbfffe"/><stop offset="0.33" stop-color="#dffffe"/><stop offset="0.44" stop-color="#f4fffe"/><stop offset="0.56" stop-color="#fff4f3"/><stop offset="0.67" stop-color="#ffe1df"/><stop offset="0.78" stop-color="#ffcfce"/><stop offset="0.89" stop-color="#ffc0bf"/><stop offset="1.00" stop-color="#ffb2b1"/></linearGradient><linearGradient id="c30" x1="0" x2="1" y1="0" y2="0"><stop offset="0.00" stop-color="#a5feff"/><stop offset="0.11" stop-color="#b8feff"/><stop offset="0.22" stop-color="#ccfeff"/><stop offset="0.33" stop-color="#e0feff"/><stop offset="0.44" stop-color="#f6feff"/><stop offset="0.56" stop-color="#fff2f3"/><stop offset="0.67" stop-color="#ffdfe0"/><stop offset="0.78" stop-color="#ffcece"/><stop offset="0.89" stop-color="#ffbfbf"/><stop offset="1.00" stop-color="#ffb1b2"/></linearGradient><linearGradient id="c31" x1="0" x2="1" y1="0" y2="0"><stop offset="0.00" stop-color="#a6fdff"/><stop offset="0.11" stop-color="#b8fcff"/><stop offset="0.22" stop-color="#ccfcff"/><stop offset="0.33" stop-color="#e0fcff"/><stop offset="0.44" stop-color="#f6fcff"/><stop offset="0.56" stop-color="#fff0f3"/><stop offset="0.67" stop-color="#ffdde0"/><stop offset="0.78" stop-color="#ffcccf"/><stop offset="0.89" stop-color="#ffbdc0"/><stop offset="1.00" stop-color="#ffb0b2"/></linearGradient><linearGradient id="c32" x1="0" x2="1" y1="0" y2="0"><stop offset="0.00" stop-color="#a6fbff"/><stop offset="0.11" stop-color="#b8faff"/><stop offset="0.22" stop-color="#ccfaff"/><stop offset="0.33" stop-color="#e0faff"/><stop offset="0.44" stop-color="#f5faff"/><stop offset="0.56" stop-color="#ffeef3"/><stop offset="0.67" stop-color="#ffdbe0"/><stop offset="0.78" stop-color="#ffcbcf"/><stop offset="0.89" stop-color="#ffbcc0"/><stop offset="1.00" stop-color="#ffaeb2"/></linearGradient><linearGradient id="c33" x1="0" x2="1" y1="0" y2="0"><stop offset="0.00" stop-color="#a6f9ff"/><stop offset="0.11" stop-color="#b8f8ff"/><stop offset="0.22" stop-color="#ccf8ff"/><stop offset="0.33" stop-color="#e0f8ff"/><stop offset="0.44" stop-color="#f5f8ff"/><stop offset="0.56" stop-color="#ffedf3"/><stop offset="0.67" stop-color="#ffdae0"/><stop offset="0.78" stop-color="#ffc9cf"/><stop offset="0.89" stop-color="#ffbac0"/><stop offset="1.00" stop-color="#ffadb2"/></linearGradient><linearGradient id="c34" x1="0" x2="1" y1="0" y2="0"><stop offset="0.00" stop-color="#a6f7ff"/><stop offset="0.11" stop-color="#b9f7ff"/><stop offset="0.22" stop-color="#ccf6ff"/><stop offset="0.33" stop-color="#e0f6ff"/><stop offset="0.44" stop-color="#f5f6ff"/><stop offset="0.56" stop-color="#ffebf3"/><stop offset="0.67" stop-color="#ffd8e0"/><stop offset="0.78" stop-color="#ffc8cf"/><stop offset="0.89" stop-color="#ffb9c0"/><stop offset="1.00" stop-color="#ffacb3"/></linearGradient><linearGradient id="c35" x1="0" x2="1" y1="0" y2="0"><stop offset="0.00" stop-color="#a6f5ff"/><stop offset="0.11" stop-color="#b9f5ff"/><stop offset="0.22" stop-color="#ccf4ff"/><stop offset="0.33" stop-color="#e0f4ff"/><stop offset="0.44" stop-color="#f5f4ff"/><stop offset="0.56" stop-color="#ffe9f4"/><stop offset="0.67" stop-color="#ffd6e1"/><stop offset="0.78" stop-color="#ffc6d0"/><stop offset="0.89" stop-color="#ffb7c1"/><stop offset="1.00" stop-color="#ffaab3"/></linearGradient><linearGradient id="c36" x1="0" x2="1" y1="0" y2="0"><stop offset="0.00" stop-color="#a6f3ff"/><stop offset="0.11" stop-color="#b9f3ff"/><stop offset="0.22" stop-color="#ccf2ff"/><stop offset="0.33" stop-color="#e0f2ff"/><stop offset="0.44" stop-color="#f5f2ff"/><stop offset="0.56" stop-color="#ffe7f4"/><stop offset="0.67" stop-color="#ffd5e1"/><stop offset="0.78" stop-color="#ffc5d0"/><stop offset="0.89" stop-color="#ffb6c1"/><stop offset="1.00" stop-color="#ffa9b3"/></linearGradient><linearGradient id="c37" x1="0" x2="1" y1="0" y2="0"><stop offset="0.00" stop-color="#a6f1ff"/><stop offset="0.11" stop-color="#b9f1ff"/><stop offset="0.22" stop-color="#ccf0ff"/><stop offset="0.33" stop-color="#e0f0ff"/><stop offset="0.44" stop-color="#f5f0ff"/><stop offset="0.56" stop-color="#ffe5f4"/><stop offset="0.67" stop-color="#ffd3e1"/><stop offset="0.78" stop-color="#ffc3d0"/><stop offset="0.89" stop-color="#ffb5c1"/><stop offset="1.00" stop-color="#ffa8b3"/></linearGradient><linearGradient id="c38" x1="0" x2="1" y1="0" y2="0"><stop offset="0.00" stop-color="#a6efff"/><stop offset="0.11" stop-color="#b9efff"/><stop offset="0.22" stop-color="#cceeff"/><stop offset="0.33" stop-color="#e0eeff"/><stop offset="0.44" stop-color="#f5eeff"/><stop offset="0.56" stop-color="#ffe3f4"/><stop offset="0.67" stop-color="#ffd1e1"/><stop offset="0.78" stop-color="#ffc1d0"/><stop offset="0.89" stop-color="#ffb3c1"/><stop offset="1.00" stop-color="#ffa6b4"/></linearGradient><linearGradient id="c39" x1="0" x2="1" y1="0" y2="0"><stop offset="0.00" stop-color="#a6edff"/><stop offset="0.11" stop-color="#b9edff"/><stop offset="0.22" stop-color="#ccedff"/><stop offset="0.33" stop-color="#e0ecff"/><stop offset="0.44" stop-color="#f5ecff"/><stop offset="0.56" stop-color="#ffe2f4"/><stop offset="0.67" stop-color="#ffd0e1"/><stop offset="0.78" stop-color="#ffc0d1"/><stop offset="0.89" stop-color="#ffb2c2"/><stop offset="1.00" stop-color="#ffa5b4"/></linearGradient><linearGradient id="c40" x1="0" x2="1" y1="0" y2="0"><stop offset="0.00" stop-color="#a7ebff"/><stop offset="0.11" stop-color="#b9ebff"/><stop offset="0.22" stop-color="#ccebff"/><stop offset="0.33" stop-color="#e0eaff"/><stop offset="0.44" stop-color="#f4eaff"/><stop offset="0.56" stop-color="#ffe0f5"/><stop offset="0.67" stop-color="#ffcee2"/><stop offset="0.78" stop-color="#ffbfd1"/><stop offset="0.89" stop-color="#ffb0c2"/><stop offset="1.00" stop-color="#ffa4b4"/></linearGradient><linearGradient id="c41" x1="0" x2="1" y1="0" y2="0"><stop offset="0.00" stop-color="#a7e9ff"/><stop offset="0.11" stop-color="#b9e9ff"/><stop offset="0.22" stop-color="#cce9ff"/><stop offset="0.33" stop-color="#e0e8ff"/><stop offset="0.44" stop-color="#f4e8ff"/><stop offset="0.56" stop-color="#ffdef5"/><stop offset="0.67" stop-color="#ffcde2"/><stop offset="0.78" stop-color="#ffbdd1"/><stop offset="0.89" stop-color="#ffafc2"/><stop offset="1.00" stop-color="#ffa3b5"/></linearGradient><linearGradient id="c42" x1="0" x2="1" y1="0" y2="0"><stop offset="0.00" stop-color="#a7e8ff"/><stop offset="0.11" stop-color="#b9e7ff"/><stop offset="0.22" stop-color="#cce7ff"/><stop offset="0.33" stop-color="#e0e6ff"/><stop offset="0.44" stop-color="#f4e6ff"/><stop offset="0.56" stop-color="#ffdcf5"/><stop offset="0.67" stop-color="#ffcbe2"/><stop offset="0.78" stop-color="#ffbcd1"/><stop offset="0.89" stop-color="#ffaec2"/><stop offset="1.00" stop-color="#ffa1b5"/></linearGradient><linearGradient id="c43" x1="0" x2="1" y1="0" y2="0"><stop offset="0.00" stop-color="#a7e6ff"/><stop offset="0.11" stop-color="#b9e5ff"/><stop offset="0.22" stop-color="#cce5ff"/><stop offset="0.33" stop-color="#e0e5ff"/><stop offset="0.44" stop-color="#f4e4ff"/><stop offset="0.56" stop-color="#ffdbf5"/><stop offset="0.67" stop-color="#ffc9e2"/><stop offset="0.78" stop-color="#ffbad1"/><stop offset="0.89" stop-color="#ffacc2"/><stop offset="1.00" stop-color="#ffa0b5"/></linearGradient><linearGradient id="c44" x1="0" x2="1" y1="0" y2="0"><stop offset="0.00" stop-color="#a7e4ff"/><stop offset="0.11" stop-color="#b9e4ff"/><stop offset="0.22" stop-color="#cce3ff"/><stop offset="0.33" stop-color="#e0e3ff"/><stop offset="0.44" stop-color="#f4e2ff"/><stop offset="0.56" stop-color="#ffd9f5"/><stop offset="0.67" stop-color="#ffc8e2"/><stop offset="0.78" stop-color="#ffb9d2"/><stop offset="0.89" stop-color="#ffabc3"/><stop offset="1.00" stop-color="#ff9fb5"/></linearGradient><linearGradient id="c45" x1="0" x2="1" y1="0" y2="0"><stop offset="0.00" stop-color="#a7e2ff"/><stop offset="0.11" stop-color="#b9e2ff"/><stop offset="0.22" stop-color="#cce1ff"/><stop offset="0.33" stop-color="#e0e1ff"/><stop offset="0.44" stop-color="#f4e0ff"/><stop offset="0.56" stop-color="#ffd7f5"/><stop offset="0.67" stop-color="#ffc6e3"/><stop offset="0.78" stop-color="#ffb7d2"/><stop offset="0.89" stop-color="#ffaac3"/><stop offset="1.00" stop-color="#ff9eb6"/></linearGradient><linearGradient id="c46" x1="0" x2="1" y1="0" y2="0"><stop offset="0.00" stop-color="#a7e0ff"/><stop offset="0.11" stop-color="#b9e0ff"/><stop offset="0.22" stop-color="#ccdfff"/><stop offset="0.33" stop-color="#e0dfff"/><stop offset="0.44" stop-color="#f4deff"/><stop offset="0.56" stop-color="#ffd5f6"/><stop offset="0.67" stop-color="#ffc5e3"/><stop offset="0.78" stop-color="#ffb6d2"/><stop offset="0.89" stop-color="#ffa8c3"/><stop offset="1.00" stop-color="#ff9cb6"/></linearGradient><linearGradient id="c47" x1="0" x2="1" y1="0" y2="0"><stop offset="0.00" stop-color="#a7dfff"/><stop offset="0.11" stop-color="#b9deff"/><stop offset="0.22" stop-color="#ccdeff"/><stop offset="0.33" stop-color="#e0ddff"/><stop offset="0.44" stop-color="#f4dcff"/><stop offset="0.56" stop-color="#ffd4f6"/><stop offset="0.67" stop-color="#ffc3e3"/><stop offset="0.78" stop-color="#ffb4d2"/><stop offset="0.89" stop-color="#ffa7c3"/><stop offset="1.00" stop-color="#ff9bb6"/></linearGradient><linearGradient id="c48" x1="0" x2="1" y1="0" y2="0"><stop offset="0.00" stop-color="#a7ddff"/><stop offset="0.11" stop-color="#b9dcff"/><stop offset="0.22" stop-color="#ccdcff"/><stop offset="0.33" stop-color="#dfdbff"/><stop offset="0.44" stop-color="#f4dbff"/><stop offset="0.56" stop-color="#ffd2f6"/><stop offset="0.67" stop-color="#ffc2e3"/><stop offset="0.78" stop-color="#ffb3d3"/><stop offset="0.89" stop-color="#ffa6c4"/><stop offset="1.00" stop-color="#ff9ab6"/></linearGradient><linearGradient id="c49" x1="0" x2="1" y1="0" y2="0"><stop offset="0.00" stop-color="#a8dbff"/><stop offset="0.11" stop-color="#b9dbff"/><stop offset="0.22" stop-color="#ccdaff"/><stop offset="0.33" stop-color="#dfd9ff"/><stop offset="0.44" stop-color="#f3d9ff"/><stop offset="0.56" stop-color="#ffd0f6"/><stop offset="0.67" stop-color="#ffc0e3"/><stop offset="0.78" stop-color="#ffb1d3"/><stop offset="0.89" stop-color="#ffa4c4"/><stop offset="1.00" stop-color="#ff99b7"/></linearGradient><linearGradient id="c50" x1="0" x2="1" y1="0" y2="0"><stop offset="0.00" stop-color="#a8d9ff"/><stop offset="0.11" stop-color="#bad9ff"/><stop offset="0.22" stop-color="#ccd8ff"/><stop offset="0.33" stop-color="#dfd7ff"/><stop offset="0.44" stop-color="#f3d7ff"/><stop offset="0.56" stop-color="#ffcff6"/><stop offset="0.67" stop-color="#ffbee4"/><stop offset="0.78" stop-color="#ffb0d3"/><stop offset="0.89" stop-color="#ffa3c4"/><stop offset="1.00" stop-color="#ff97b7"/></linearGradient><linearGradient id="c51" x1="0" x2="1" y1="0" y2="0"><stop offset="0.00" stop-color="#a8d8ff"/><stop offset="0.11" stop-color="#bad7ff"/><stop offset="0.22" stop-color="#ccd6ff"/><stop offset="0.33" stop-color="#dfd6ff"/><stop offset="0.44" stop-color="#f3d5ff"/><stop offset="0.56" stop-color="#ffcdf6"/><stop offset="0.67" stop-color="#ffbde4"/><stop offset="0.78" stop-color="#ffafd3"/><stop offset="0.89" stop-color="#ffa2c4"/><stop offset="1.00" stop-color="#ff96b7"/></linearGradient><linearGradient id="c52" x1="0" x2="1" y1="0" y2="0"><stop offset="0.00" stop-color="#a8d6ff"/><stop offset="0.11" stop-color="#bad5ff"/><stop offset="0.22" stop-color="#ccd5ff"/><stop offset="0.33" stop-color="#dfd4ff"/><stop offset="0.44" stop-color="#f3d3ff"/><stop offset="0.56" stop-color="#ffcbf6"/><stop offset="0.67" stop-color="#ffbbe4"/><stop offset="0.78" stop-color="#ffadd3"/><stop offset="0.89" stop-color="#ffa0c5"/><stop offset="1.00" stop-color="#ff95b7"/></linearGradient><linearGradient id="c53" x1="0" x2="1" y1="0" y2="0"><stop offset="0.00" stop-color="#a8d4ff"/><stop offset="0.11" stop-color="#bad3ff"/><stop offset="0.22" stop-color="#ccd3ff"/><stop offset="0.33" stop-color="#dfd2ff"/><stop offset="0.44" stop-color="#f3d1ff"/><stop offset="0.56" stop-color="#ffcaf7"/><stop offset="0.67" stop-color="#ffbae4"/><stop offset="0.78" stop-color="#ffacd4"/><stop offset="0.89" stop-color="#ff9fc5"/><stop offset="1.00" stop-color="#ff94b8"/></linearGradient><linearGradient id="c54" x1="0" x2="1" y1="0" y2="0"><stop offset="0.00" stop-color="#a8d2ff"/><stop offset="0.11" stop-color="#bad2ff"/><stop offset="0.22" stop-color="#ccd1ff"/><stop offset="0.33" stop-color="#dfd0ff"/><stop offset="0.44" stop-color="#f3d0ff"/><stop offset="0.56" stop-color="#ffc8f7"/><stop offset="0.67" stop-color="#ffb8e4"/><stop offset="0.78" stop-color="#ffaad4"/><stop offset="0.89" stop-color="#ff9ec5"/><stop offset="1.00" stop-color="#ff93b8"/></linearGradient><linearGradient id="c55" x1="0" x2="1" y1="0" y2="0"><stop offset="0.00" stop-color="#a8d1ff"/><stop offset="0.11" stop-color="#bad0ff"/><stop offset="0.22" stop-color="#cccfff"/><stop offset="0.33" stop-color="#dfcfff"/><stop offset="0.44" stop-color="#f3ceff"/><stop offset="0.56" stop-color="#ffc6f7"/><stop offset="0.67" stop-color="#ffb7e5"/><stop offset="0.78" stop-color="#ffa9d4"/><stop offset="0.89" stop-color="#ff9dc5"/><stop offset="1.00" stop-color="#ff91b8"/></linearGradient><linearGradient id="c56" x1="0" x2="1" y1="0" y2="0"><stop offset="0.00" stop-color="#a8cfff"/><stop offset="0.11" stop-color="#baceff"/><stop offset="0.22" stop-color="#ccceff"/><stop offset="0.33" stop-color="#dfcdff"/><stop offset="0.44" stop-color="#f3ccff"/><stop offset="0.56" stop-color="#ffc5f7"/><stop offset="0.67" stop-color="#ffb5e5"/><stop offset="0.78" stop-color="#ffa8d4"/><stop offset="0.89" stop-color="#ff9bc6"/><stop offset="1.00" stop-color="#ff90b8"/></linearGradient><linearGradient id="c57" x1="0" x2="1" y1="0" y2="0"><stop offset="0.00" stop-color="#a8cdff"/><stop offset="0.11" stop-color="#bacdff"/><stop offset="0.22" stop-color="#ccccff"/><stop offset="0.33" stop-color="#dfcbff"/><stop offset="0.44" stop-color="#f3caff"/><stop offset="0.56" stop-color="#ffc3f7"/><stop offset="0.67" stop-color="#ffb4e5"/><stop offset="0.78" stop-color="#ffa6d5"/><stop offset="0.89" stop-color="#ff9ac6"/><stop offset="1.00" stop-color="#ff8fb9"/></linearGradient><linearGradient id="c58" x1="0" x2="1" y1="0" y2="0"><stop offset="0.00" stop-color="#a9ccff"/><stop offset="0.11" stop-color="#bacbff"/><stop offset="0.22" stop-color="#cccaff"/><stop offset="0.33" stop-color="#dfc9ff"/><stop offset="0.44" stop-color="#f3c8ff"/><stop offset="0.56" stop-color="#ffc2f7"/><stop offset="0.67" stop-color="#ffb2e5"/><stop offset="0.78" stop-color="#ffa5d5"/><stop offset="0.89" stop-color="#ff99c6"/><stop offset="1.00" stop-color="#ff8eb9"/></linearGradient><linearGradient id="c59" x1="0" x2="1" y1="0" y2="0"><stop offset="0.00" stop-color="#a9caff"/><stop offset="0.11" stop-color="#bac9ff"/><stop offset="0.22" stop-color="#ccc8ff"/><stop offset="0.33" stop-color="#dfc8ff"/><stop offset="0.44" stop-color="#f2c7ff"/><stop offset="0.56" stop-color="#ffc0f8"/><stop offset="0.67" stop-color="#ffb1e5"/><stop offset="0.78" stop-color="#ffa4d5"/><stop offset="0.89" stop-color="#ff97c6"/><stop offset="1.00" stop-color="#ff8db9"/></linearGradient><linearGradient id="c60" x1="0" x2="1" y1="0" y2="0"><stop offset="0.00" stop-color="#a9c8ff"/><stop offset="0.11" stop-color="#bac8ff"/><stop offset="0.22" stop-color="#ccc7ff"/><stop offset="0.33" stop-color="#dfc6ff"/><stop offset="0.44" stop-color="#f2c5ff"/><stop offset="0.56" stop-color="#ffbef8"/><stop offset="0.67" stop-color="#ffb0e5"/><stop offset="0.78" stop-color="#ffa2d5"/><stop offset="0.89" stop-color="#ff96c6"/><stop offset="1.00" stop-color="#ff8bb9"/></linearGradient><clipPath id="cieclip"><rect x="472.0" y="748.6" width="253.79999999999995" height="182.79999999999995"/></clipPath></defs><rect x="472" y="749" width="254" height="3" fill="url(#c0)" shape-rendering="crispEdges"/><rect x="472" y="752" width="254" height="3" fill="url(#c1)" shape-rendering="crispEdges"/><rect x="472" y="755" width="254" height="3" fill="url(#c2)" shape-rendering="crispEdges"/><rect x="472" y="758" width="254" height="3" fill="url(#c3)" shape-rendering="crispEdges"/><rect x="472" y="761" width="254" height="3" fill="url(#c4)" shape-rendering="crispEdges"/><rect x="472" y="764" width="254" height="3" fill="url(#c5)" shape-rendering="crispEdges"/><rect x="472" y="767" width="254" height="3" fill="url(#c6)" shape-rendering="crispEdges"/><rect x="472" y="770" width="254" height="3" fill="url(#c7)" shape-rendering="crispEdges"/><rect x="472" y="773" width="254" height="3" fill="url(#c8)" shape-rendering="crispEdges"/><rect x="472" y="776" width="254" height="3" fill="url(#c9)" shape-rendering="crispEdges"/><rect x="472" y="779" width="254" height="3" fill="url(#c10)" shape-rendering="crispEdges"/><rect x="472" y="782" width="254" height="3" fill="url(#c11)" shape-rendering="crispEdges"/><rect x="472" y="785" width="254" height="3" fill="url(#c12)" shape-rendering="crispEdges"/><rect x="472" y="788" width="254" height="3" fill="url(#c13)" shape-rendering="crispEdges"/><rect x="472" y="791" width="254" height="3" fill="url(#c14)" shape-rendering="crispEdges"/><rect x="472" y="794" width="254" height="3" fill="url(#c15)" shape-rendering="crispEdges"/><rect x="472" y="797" width="254" height="3" fill="url(#c16)" shape-rendering="crispEdges"/><rect x="472" y="800" width="254" height="3" fill="url(#c17)" shape-rendering="crispEdges"/><rect x="472" y="803" width="254" height="3" fill="url(#c18)" shape-rendering="crispEdges"/><rect x="472" y="806" width="254" height="3" fill="url(#c19)" shape-rendering="crispEdges"/><rect x="472" y="809" width="254" height="3" fill="url(#c20)" shape-rendering="crispEdges"/><rect x="472" y="812" width="254" height="3" fill="url(#c21)" shape-rendering="crispEdges"/><rect x="472" y="815" width="254" height="3" fill="url(#c22)" shape-rendering="crispEdges"/><rect x="472" y="818" width="254" height="3" fill="url(#c23)" shape-rendering="crispEdges"/><rect x="472" y="821" width="254" height="3" fill="url(#c24)" shape-rendering="crispEdges"/><rect x="472" y="824" width="254" height="3" fill="url(#c25)" shape-rendering="crispEdges"/><rect x="472" y="827" width="254" height="3" fill="url(#c26)" shape-rendering="crispEdges"/><rect x="472" y="830" width="254" height="3" fill="url(#c27)" shape-rendering="crispEdges"/><rect x="472" y="833" width="254" height="3" fill="url(#c28)" shape-rendering="crispEdges"/><rect x="472" y="836" width="254" height="3" fill="url(#c29)" shape-rendering="crispEdges"/><rect x="472" y="839" width="254" height="3" fill="url(#c30)" shape-rendering="crispEdges"/><rect x="472" y="842" width="254" height="3" fill="url(#c31)" shape-rendering="crispEdges"/><rect x="472" y="845" width="254" height="3" fill="url(#c32)" shape-rendering="crispEdges"/><rect x="472" y="848" width="254" height="3" fill="url(#c33)" shape-rendering="crispEdges"/><rect x="472" y="851" width="254" height="3" fill="url(#c34)" shape-rendering="crispEdges"/><rect x="472" y="854" width="254" height="3" fill="url(#c35)" shape-rendering="crispEdges"/><rect x="472" y="857" width="254" height="3" fill="url(#c36)" shape-rendering="crispEdges"/><rect x="472" y="860" width="254" height="3" fill="url(#c37)" shape-rendering="crispEdges"/><rect x="472" y="863" width="254" height="3" fill="url(#c38)" shape-rendering="crispEdges"/><rect x="472" y="866" width="254" height="3" fill="url(#c39)" shape-rendering="crispEdges"/><rect x="472" y="869" width="254" height="3" fill="url(#c40)" shape-rendering="crispEdges"/><rect x="472" y="872" width="254" height="3" fill="url(#c41)" shape-rendering="crispEdges"/><rect x="472" y="875" width="254" height="3" fill="url(#c42)" shape-rendering="crispEdges"/><rect x="472" y="878" width="254" height="3" fill="url(#c43)" shape-rendering="crispEdges"/><rect x="472" y="881" width="254" height="3" fill="url(#c44)" shape-rendering="crispEdges"/><rect x="472" y="884" width="254" height="3" fill="url(#c45)" shape-rendering="crispEdges"/><rect x="472" y="887" width="254" height="3" fill="url(#c46)" shape-rendering="crispEdges"/><rect x="472" y="890" width="254" height="3" fill="url(#c47)" shape-rendering="crispEdges"/><rect x="472" y="893" width="254" height="3" fill="url(#c48)" shape-rendering="crispEdges"/><rect x="472" y="896" width="254" height="3" fill="url(#c49)" shape-rendering="crispEdges"/><rect x="472" y="899" width="254" height="3" fill="url(#c50)" shape-rendering="crispEdges"/><rect x="472" y="902" width="254" height="3" fill="url(#c51)" shape-rendering="crispEdges"/><rect x="472" y="905" width="254" height="3" fill="url(#c52)" shape-rendering="crispEdges"/><rect x="472" y="908" width="254" height="3" fill="url(#c53)" shape-rendering="crispEdges"/><rect x="472" y="911" width="254" height="3" fill="url(#c54)" shape-rendering="crispEdges"/><rect x="472" y="914" width="254" height="3" fill="url(#c55)" shape-rendering="crispEdges"/><rect x="472" y="917" width="254" height="3" fill="url(#c56)" shape-rendering="crispEdges"/><rect x="472" y="920" width="254" height="3" fill="url(#c57)" shape-rendering="crispEdges"/><rect x="472" y="923" width="254" height="3" fill="url(#c58)" shape-rendering="crispEdges"/><rect x="472" y="926" width="254" height="3" fill="url(#c59)" shape-rendering="crispEdges"/><rect x="472" y="929" width="254" height="3" fill="url(#c60)" shape-rendering="crispEdges"/><rect x="472.0" y="748.6" width="253.8" height="182.8" fill="none" stroke="#8a8a8a" stroke-width="1.4"/><g clip-path="url(#cieclip)"><path d="M511.5 924.8 L560 890.5 L610 855.5 L660 821.5 L725.8 777.2" stroke="#000" stroke-width="2.6" fill="none"/></g><rect x="590.8" y="832.2" width="13.6" height="13.6" fill="#fff" stroke="#000" stroke-width="1.6"/><circle cx="506.8" cy="927.3" r="4.2" fill="#3a3a3a" stroke="#000" stroke-width="1.1"/><circle cx="509.6" cy="926.9" r="4.2" fill="#4e4e4e" stroke="#000" stroke-width="1.1"/><circle cx="511.6" cy="924.6" r="4.3" fill="#6a6a6a" stroke="#000" stroke-width="1.1"/><circle cx="512.4" cy="920.9" r="4.4" fill="#848484" stroke="#000" stroke-width="1.1"/><circle cx="513.5" cy="915.9" r="4.5" fill="#9a9a9a" stroke="#000" stroke-width="1.1"/><circle cx="515.7" cy="909.8" r="4.6" fill="#b0b0b0" stroke="#000" stroke-width="1.1"/><circle cx="518.4" cy="902.8" r="4.6" fill="#c6c6c6" stroke="#000" stroke-width="1.1"/><circle cx="521.1" cy="896.0" r="4.7" fill="#dedede" stroke="#000" stroke-width="1.1"/><circle cx="531.4" cy="884.2" r="4.2" fill="#ffffff" stroke="#000" stroke-width="1.1"/><path d="M465.5 908.80H472.0" stroke="#d0d0d0" stroke-width="1.4"/><path d="M481.80 931.4V937" stroke="#d0d0d0" stroke-width="1.4"/><path d="M465.5 872.30H472.0" stroke="#d0d0d0" stroke-width="1.4"/><path d="M532.40 931.4V937" stroke="#d0d0d0" stroke-width="1.4"/><path d="M465.5 835.80H472.0" stroke="#d0d0d0" stroke-width="1.4"/><path d="M583.00 931.4V937" stroke="#d0d0d0" stroke-width="1.4"/><path d="M465.5 799.30H472.0" stroke="#d0d0d0" stroke-width="1.4"/><path d="M633.60 931.4V937" stroke="#d0d0d0" stroke-width="1.4"/><path d="M465.5 762.80H472.0" stroke="#d0d0d0" stroke-width="1.4"/><path d="M684.20 931.4V937" stroke="#d0d0d0" stroke-width="1.4"/></svg>
<span class="t" style="left:434.90px;top:900px;line-height:17px;font-size:15.15px;color:#dcdcdc;letter-spacing:0.041px;">0,31</span>
<span class="t" style="left:467.00px;top:940px;line-height:17px;font-size:15.15px;color:#dcdcdc;letter-spacing:0.041px;">0,29</span>
<span class="t" style="left:434.90px;top:864px;line-height:17px;font-size:15.15px;color:#dcdcdc;letter-spacing:0.041px;">0,32</span>
<span class="t" style="left:522.15px;top:940px;line-height:17px;font-size:15.00px;color:#dcdcdc;letter-spacing:-0.176px;">0,3</span>
<span class="t" style="left:434.90px;top:827px;line-height:17px;font-size:15.15px;color:#dcdcdc;letter-spacing:0.041px;">0,33</span>
<span class="t" style="left:568.20px;top:940px;line-height:17px;font-size:15.15px;color:#dcdcdc;letter-spacing:0.041px;">0,31</span>
<span class="t" style="left:434.90px;top:791px;line-height:17px;font-size:15.15px;color:#dcdcdc;letter-spacing:0.041px;">0,34</span>
<span class="t" style="left:618.80px;top:940px;line-height:17px;font-size:15.15px;color:#dcdcdc;letter-spacing:0.041px;">0,32</span>
<span class="t" style="left:434.90px;top:754px;line-height:17px;font-size:15.15px;color:#dcdcdc;letter-spacing:0.041px;">0,35</span>
<span class="t" style="left:669.40px;top:940px;line-height:17px;font-size:15.15px;color:#dcdcdc;letter-spacing:0.041px;">0,33</span>
<div class="b" style="left:744px;top:723.0px;width:928.5px;height:224.0px;background:#0c0c0c;"></div>
<div class="b" style="left:745.5px;top:724.0px;width:925.5px;height:30px;background:linear-gradient(#323232 0%,#2b2b2b 50%,#1a1a1a 52%,#141414 100%);"></div>
<span class="t" style="left:941.50px;top:731px;line-height:17px;font-size:15.00px;color:#f0f0f0;">0</span>
<span class="t" style="left:1011.20px;top:731px;line-height:17px;font-size:15.00px;color:#f0f0f0;letter-spacing:0.115px;">10</span>
<span class="t" style="left:1079.60px;top:731px;line-height:17px;font-size:15.00px;color:#f0f0f0;letter-spacing:0.115px;">20</span>
<span class="t" style="left:1148.20px;top:731px;line-height:17px;font-size:15.00px;color:#f0f0f0;letter-spacing:0.115px;">30</span>
<span class="t" style="left:1216.80px;top:731px;line-height:17px;font-size:15.00px;color:#f0f0f0;letter-spacing:0.315px;">40</span>
<span class="t" style="left:1285.60px;top:731px;line-height:17px;font-size:15.00px;color:#f0f0f0;letter-spacing:0.115px;">50</span>
<span class="t" style="left:1354.20px;top:731px;line-height:17px;font-size:15.00px;color:#f0f0f0;letter-spacing:0.315px;">60</span>
<span class="t" style="left:1423.00px;top:731px;line-height:17px;font-size:15.00px;color:#f0f0f0;letter-spacing:0.115px;">70</span>
<span class="t" style="left:1491.60px;top:731px;line-height:17px;font-size:15.00px;color:#f0f0f0;letter-spacing:0.315px;">80</span>
<span class="t" style="left:1560.40px;top:731px;line-height:17px;font-size:15.00px;color:#f0f0f0;letter-spacing:0.115px;">90</span>
<span class="t" style="left:1625.00px;top:731px;line-height:17px;font-size:15.00px;color:#f0f0f0;letter-spacing:0.286px;">100</span>
<div class="b" style="left:745.5px;top:754.0px;width:925.5px;height:27.5px;background:linear-gradient(#414141,#3a3a3a);"></div>
<span class="t" style="left:758.00px;top:761px;line-height:17px;font-size:15.91px;color:#f4f4f4;letter-spacing:0.075px;font-weight:700;text-shadow:1px 1px 1px rgba(0,0,0,.55);">x: CIE31</span>
<span class="t" style="left:911.30px;top:760px;line-height:18px;font-size:16.10px;color:#ececec;text-shadow:1px 1px 1px rgba(0,0,0,.4);">0,25</span>
<span class="t" style="left:989.50px;top:760px;line-height:18px;font-size:16.10px;color:#ececec;text-shadow:1px 1px 1px rgba(0,0,0,.4);">0,29</span>
<span class="t" style="left:1058.20px;top:760px;line-height:18px;font-size:16.10px;color:#ececec;text-shadow:1px 1px 1px rgba(0,0,0,.4);">0,30</span>
<span class="t" style="left:1126.90px;top:760px;line-height:18px;font-size:16.10px;color:#ececec;text-shadow:1px 1px 1px rgba(0,0,0,.4);">0,30</span>
<span class="t" style="left:1195.60px;top:760px;line-height:18px;font-size:16.10px;color:#ececec;text-shadow:1px 1px 1px rgba(0,0,0,.4);">0,30</span>
<span class="t" style="left:1264.30px;top:760px;line-height:18px;font-size:16.10px;color:#ececec;text-shadow:1px 1px 1px rgba(0,0,0,.4);">0,30</span>
<span class="t" style="left:1333.00px;top:760px;line-height:18px;font-size:16.10px;color:#ececec;text-shadow:1px 1px 1px rgba(0,0,0,.4);">0,30</span>
<span class="t" style="left:1401.70px;top:760px;line-height:18px;font-size:16.10px;color:#ececec;text-shadow:1px 1px 1px rgba(0,0,0,.4);">0,30</span>
<span class="t" style="left:1470.40px;top:760px;line-height:18px;font-size:16.10px;color:#ececec;text-shadow:1px 1px 1px rgba(0,0,0,.4);">0,30</span>
<span class="t" style="left:1539.10px;top:760px;line-height:18px;font-size:16.10px;color:#ececec;text-shadow:1px 1px 1px rgba(0,0,0,.4);">0,30</span>
<span class="t" style="left:1607.90px;top:760px;line-height:18px;font-size:16.10px;color:#ececec;text-shadow:1px 1px 1px rgba(0,0,0,.4);">0,30</span>
<div class="b" style="left:745.5px;top:781.5px;width:925.5px;height:27.5px;background:linear-gradient(#8a8a8a,#828282);"></div>
<span class="t" style="left:758.00px;top:788px;line-height:17px;font-size:15.91px;color:#f4f4f4;letter-spacing:0.075px;font-weight:700;text-shadow:1px 1px 1px rgba(0,0,0,.55);">y: CIE31</span>
<span class="t" style="left:911.30px;top:787px;line-height:18px;font-size:16.10px;color:#ececec;text-shadow:1px 1px 1px rgba(0,0,0,.4);">0,25</span>
<span class="t" style="left:989.50px;top:787px;line-height:18px;font-size:16.10px;color:#ececec;text-shadow:1px 1px 1px rgba(0,0,0,.4);">0,30</span>
<span class="t" style="left:1058.20px;top:787px;line-height:18px;font-size:16.10px;color:#ececec;text-shadow:1px 1px 1px rgba(0,0,0,.4);">0,30</span>
<span class="t" style="left:1126.90px;top:787px;line-height:18px;font-size:16.10px;color:#ececec;text-shadow:1px 1px 1px rgba(0,0,0,.4);">0,31</span>
<span class="t" style="left:1195.60px;top:787px;line-height:18px;font-size:16.10px;color:#ececec;text-shadow:1px 1px 1px rgba(0,0,0,.4);">0,31</span>
<span class="t" style="left:1264.30px;top:787px;line-height:18px;font-size:16.10px;color:#ececec;text-shadow:1px 1px 1px rgba(0,0,0,.4);">0,31</span>
<span class="t" style="left:1333.00px;top:787px;line-height:18px;font-size:16.10px;color:#ececec;text-shadow:1px 1px 1px rgba(0,0,0,.4);">0,31</span>
<span class="t" style="left:1401.70px;top:787px;line-height:18px;font-size:16.10px;color:#ececec;text-shadow:1px 1px 1px rgba(0,0,0,.4);">0,31</span>
<span class="t" style="left:1470.40px;top:787px;line-height:18px;font-size:16.10px;color:#ececec;text-shadow:1px 1px 1px rgba(0,0,0,.4);">0,31</span>
<span class="t" style="left:1539.10px;top:787px;line-height:18px;font-size:16.10px;color:#ececec;text-shadow:1px 1px 1px rgba(0,0,0,.4);">0,31</span>
<span class="t" style="left:1607.90px;top:787px;line-height:18px;font-size:16.10px;color:#ececec;text-shadow:1px 1px 1px rgba(0,0,0,.4);">0,32</span>
<div class="b" style="left:745.5px;top:809.0px;width:925.5px;height:27.5px;background:linear-gradient(#414141,#3a3a3a);"></div>
<span class="t" style="left:758.00px;top:816px;line-height:17px;font-size:15.60px;color:#f4f4f4;font-weight:700;text-shadow:1px 1px 1px rgba(0,0,0,.55);">Y</span>
<span class="t" style="left:911.30px;top:815px;line-height:18px;font-size:16.10px;color:#ececec;text-shadow:1px 1px 1px rgba(0,0,0,.4);">0,33</span>
<span class="t" style="left:989.50px;top:815px;line-height:18px;font-size:16.10px;color:#ececec;text-shadow:1px 1px 1px rgba(0,0,0,.4);">3,68</span>
<span class="t" style="left:1058.20px;top:815px;line-height:18px;font-size:16.10px;color:#ececec;text-shadow:1px 1px 1px rgba(0,0,0,.4);">15,07</span>
<span class="t" style="left:1126.90px;top:815px;line-height:18px;font-size:16.10px;color:#ececec;text-shadow:1px 1px 1px rgba(0,0,0,.4);">35,74</span>
<span class="t" style="left:1195.60px;top:815px;line-height:18px;font-size:16.10px;color:#ececec;text-shadow:1px 1px 1px rgba(0,0,0,.4);">68,18</span>
<span class="t" style="left:1264.30px;top:815px;line-height:18px;font-size:16.10px;color:#ececec;text-shadow:1px 1px 1px rgba(0,0,0,.4);">112,90</span>
<span class="t" style="left:1333.00px;top:815px;line-height:18px;font-size:16.10px;color:#ececec;text-shadow:1px 1px 1px rgba(0,0,0,.4);">167,04</span>
<span class="t" style="left:1401.70px;top:815px;line-height:18px;font-size:16.10px;color:#ececec;text-shadow:1px 1px 1px rgba(0,0,0,.4);">233,64</span>
<span class="t" style="left:1470.40px;top:815px;line-height:18px;font-size:16.10px;color:#ececec;text-shadow:1px 1px 1px rgba(0,0,0,.4);">318,14</span>
<span class="t" style="left:1539.10px;top:815px;line-height:18px;font-size:16.10px;color:#ececec;text-shadow:1px 1px 1px rgba(0,0,0,.4);">415,13</span>
<span class="t" style="left:1607.90px;top:815px;line-height:18px;font-size:16.10px;color:#ececec;text-shadow:1px 1px 1px rgba(0,0,0,.4);">523,68</span>
<div class="b" style="left:745.5px;top:836.5px;width:925.5px;height:27.5px;background:linear-gradient(#8a8a8a,#828282);"></div>
<span class="t" style="left:758.00px;top:842px;line-height:19px;font-size:16.58px;color:#f4f4f4;letter-spacing:0.244px;font-weight:700;text-shadow:1px 1px 1px rgba(0,0,0,.55);">Target Y</span>
<span class="t" style="left:911.30px;top:842px;line-height:18px;font-size:16.10px;color:#ececec;text-shadow:1px 1px 1px rgba(0,0,0,.4);">0,00</span>
<span class="t" style="left:989.50px;top:842px;line-height:18px;font-size:16.10px;color:#ececec;text-shadow:1px 1px 1px rgba(0,0,0,.4);">5,41</span>
<span class="t" style="left:1058.20px;top:842px;line-height:18px;font-size:16.10px;color:#ececec;text-shadow:1px 1px 1px rgba(0,0,0,.4);">17,34</span>
<span class="t" style="left:1126.90px;top:842px;line-height:18px;font-size:16.10px;color:#ececec;text-shadow:1px 1px 1px rgba(0,0,0,.4);">37,85</span>
<span class="t" style="left:1195.60px;top:842px;line-height:18px;font-size:16.10px;color:#ececec;text-shadow:1px 1px 1px rgba(0,0,0,.4);">69,58</span>
<span class="t" style="left:1264.30px;top:842px;line-height:18px;font-size:16.10px;color:#ececec;text-shadow:1px 1px 1px rgba(0,0,0,.4);">113,04</span>
<span class="t" style="left:1333.00px;top:842px;line-height:18px;font-size:16.10px;color:#ececec;text-shadow:1px 1px 1px rgba(0,0,0,.4);">166,82</span>
<span class="t" style="left:1401.70px;top:842px;line-height:18px;font-size:16.10px;color:#ececec;text-shadow:1px 1px 1px rgba(0,0,0,.4);">233,14</span>
<span class="t" style="left:1470.40px;top:842px;line-height:18px;font-size:16.10px;color:#ececec;text-shadow:1px 1px 1px rgba(0,0,0,.4);">316,21</span>
<span class="t" style="left:1539.10px;top:842px;line-height:18px;font-size:16.10px;color:#ececec;text-shadow:1px 1px 1px rgba(0,0,0,.4);">414,39</span>
<span class="t" style="left:1607.90px;top:842px;line-height:18px;font-size:16.10px;color:#ececec;text-shadow:1px 1px 1px rgba(0,0,0,.4);">523,68</span>
<div class="b" style="left:745.5px;top:864.0px;width:925.5px;height:27.5px;background:linear-gradient(#414141,#3a3a3a);"></div>
<span class="t" style="left:758.00px;top:870px;line-height:19px;font-size:16.64px;color:#f4f4f4;letter-spacing:0.308px;font-weight:700;text-shadow:1px 1px 1px rgba(0,0,0,.55);">Gamma Log/Log</span>
<span class="t" style="left:911.30px;top:870px;line-height:18px;font-size:16.10px;color:#ececec;text-shadow:1px 1px 1px rgba(0,0,0,.4);">1,28</span>
<span class="t" style="left:989.50px;top:870px;line-height:18px;font-size:16.10px;color:#ececec;text-shadow:1px 1px 1px rgba(0,0,0,.4);">2,17</span>
<span class="t" style="left:1058.20px;top:870px;line-height:18px;font-size:16.10px;color:#ececec;text-shadow:1px 1px 1px rgba(0,0,0,.4);">2,20</span>
<span class="t" style="left:1126.90px;top:870px;line-height:18px;font-size:16.10px;color:#ececec;text-shadow:1px 1px 1px rgba(0,0,0,.4);">2,22</span>
<span class="t" style="left:1195.60px;top:870px;line-height:18px;font-size:16.10px;color:#ececec;text-shadow:1px 1px 1px rgba(0,0,0,.4);">2,22</span>
<span class="t" style="left:1264.30px;top:870px;line-height:18px;font-size:16.10px;color:#ececec;text-shadow:1px 1px 1px rgba(0,0,0,.4);">2,23</span>
<span class="t" style="left:1333.00px;top:870px;line-height:18px;font-size:16.10px;color:#ececec;text-shadow:1px 1px 1px rgba(0,0,0,.4);">2,24</span>
<span class="t" style="left:1401.70px;top:870px;line-height:18px;font-size:16.10px;color:#ececec;text-shadow:1px 1px 1px rgba(0,0,0,.4);">2,25</span>
<span class="t" style="left:1470.40px;top:870px;line-height:18px;font-size:16.10px;color:#ececec;text-shadow:1px 1px 1px rgba(0,0,0,.4);">2,23</span>
<span class="t" style="left:1539.10px;top:870px;line-height:18px;font-size:16.10px;color:#ececec;text-shadow:1px 1px 1px rgba(0,0,0,.4);">2,25</span>
<span class="t" style="left:1607.90px;top:870px;line-height:18px;font-size:16.10px;color:#ececec;text-shadow:1px 1px 1px rgba(0,0,0,.4);">2,27</span>
<div class="b" style="left:745.5px;top:891.5px;width:925.5px;height:27.5px;background:linear-gradient(#8a8a8a,#828282);"></div>
<span class="t" style="left:758.00px;top:898px;line-height:17px;font-size:15.60px;color:#f4f4f4;letter-spacing:-0.631px;font-weight:700;text-shadow:1px 1px 1px rgba(0,0,0,.55);">CCT</span>
<span class="t" style="left:911.30px;top:897px;line-height:18px;font-size:16.10px;color:#ececec;text-shadow:1px 1px 1px rgba(0,0,0,.4);">22964,00</span>
<span class="t" style="left:989.50px;top:897px;line-height:18px;font-size:16.10px;color:#ececec;text-shadow:1px 1px 1px rgba(0,0,0,.4);">8375,00</span>
<span class="t" style="left:1058.20px;top:897px;line-height:18px;font-size:16.10px;color:#ececec;text-shadow:1px 1px 1px rgba(0,0,0,.4);">7995,00</span>
<span class="t" style="left:1126.90px;top:897px;line-height:18px;font-size:16.10px;color:#ececec;text-shadow:1px 1px 1px rgba(0,0,0,.4);">7940,00</span>
<span class="t" style="left:1195.60px;top:897px;line-height:18px;font-size:16.10px;color:#ececec;text-shadow:1px 1px 1px rgba(0,0,0,.4);">7919,00</span>
<span class="t" style="left:1264.30px;top:897px;line-height:18px;font-size:16.10px;color:#ececec;text-shadow:1px 1px 1px rgba(0,0,0,.4);">7886,00</span>
<span class="t" style="left:1333.00px;top:897px;line-height:18px;font-size:16.10px;color:#ececec;text-shadow:1px 1px 1px rgba(0,0,0,.4);">7841,00</span>
<span class="t" style="left:1401.70px;top:897px;line-height:18px;font-size:16.10px;color:#ececec;text-shadow:1px 1px 1px rgba(0,0,0,.4);">7787,00</span>
<span class="t" style="left:1470.40px;top:897px;line-height:18px;font-size:16.10px;color:#ececec;text-shadow:1px 1px 1px rgba(0,0,0,.4);">7712,00</span>
<span class="t" style="left:1539.10px;top:897px;line-height:18px;font-size:16.10px;color:#ececec;text-shadow:1px 1px 1px rgba(0,0,0,.4);">7624,00</span>
<span class="t" style="left:1607.90px;top:897px;line-height:18px;font-size:16.10px;color:#ececec;text-shadow:1px 1px 1px rgba(0,0,0,.4);">7439,00</span>
<div class="b" style="left:745.5px;top:919.0px;width:925.5px;height:27.5px;background:linear-gradient(#414141,#3a3a3a);"></div>
<span class="t" style="left:758.00px;top:925px;line-height:19px;font-size:16.51px;color:#f4f4f4;letter-spacing:0.265px;font-weight:700;text-shadow:1px 1px 1px rgba(0,0,0,.55);">ΔE 2000</span>
<span class="t" style="left:911.30px;top:925px;line-height:18px;font-size:16.10px;color:#ececec;text-shadow:1px 1px 1px rgba(0,0,0,.4);">0,94</span>
<span class="t" style="left:989.50px;top:925px;line-height:18px;font-size:16.10px;color:#ececec;text-shadow:1px 1px 1px rgba(0,0,0,.4);">3,19</span>
<span class="t" style="left:1058.20px;top:925px;line-height:18px;font-size:16.10px;color:#ececec;text-shadow:1px 1px 1px rgba(0,0,0,.4);">4,02</span>
<span class="t" style="left:1126.90px;top:925px;line-height:18px;font-size:16.10px;color:#ececec;text-shadow:1px 1px 1px rgba(0,0,0,.4);">4,96</span>
<span class="t" style="left:1195.60px;top:925px;line-height:18px;font-size:16.10px;color:#ececec;text-shadow:1px 1px 1px rgba(0,0,0,.4);">5,81</span>
<span class="t" style="left:1264.30px;top:925px;line-height:18px;font-size:16.10px;color:#ececec;text-shadow:1px 1px 1px rgba(0,0,0,.4);">6,43</span>
<span class="t" style="left:1333.00px;top:925px;line-height:18px;font-size:16.10px;color:#ececec;text-shadow:1px 1px 1px rgba(0,0,0,.4);">6,79</span>
<span class="t" style="left:1401.70px;top:925px;line-height:18px;font-size:16.10px;color:#ececec;text-shadow:1px 1px 1px rgba(0,0,0,.4);">6,99</span>
<span class="t" style="left:1470.40px;top:925px;line-height:18px;font-size:16.10px;color:#ececec;text-shadow:1px 1px 1px rgba(0,0,0,.4);">7,05</span>
<span class="t" style="left:1539.10px;top:925px;line-height:18px;font-size:16.10px;color:#ececec;text-shadow:1px 1px 1px rgba(0,0,0,.4);">6,96</span>
<span class="t" style="left:1607.90px;top:925px;line-height:18px;font-size:16.10px;color:#ececec;text-shadow:1px 1px 1px rgba(0,0,0,.4);">6,30</span>
<div class="b" style="left:0px;top:968px;width:1920px;height:71px;background:#2b2b2b;"></div>
<div class="b" style="left:0.8px;top:968.8px;width:140px;height:69px;background:linear-gradient(#a4a4a4 0%,#909090 7%,#7c7c7c 50%,#626262 100%);border-radius:5px 5px 3px 3px;border:1px solid #8e8e8e;border-bottom:1px solid #4a4a4a;box-shadow:inset 0 1px 0 #a8a8a8;"></div>
<div class="b" style="left:7.0px;top:974.6px;width:127.8px;height:40.4px;background:#000000;border-radius:4px;box-shadow:inset 0 0 0 1px rgba(0,0,0,.25),0 1px 0 rgba(255,255,255,.12);"></div>
<span class="t" style="left:67.19px;top:1023px;line-height:12px;font-size:11.20px;color:#2a2a2a;font-weight:700;">0</span>
<div class="b" style="left:142.8px;top:968.8px;width:140px;height:69px;background:linear-gradient(#a4a4a4 0%,#909090 7%,#7c7c7c 50%,#626262 100%);border-radius:5px 5px 3px 3px;border:1px solid #8e8e8e;border-bottom:1px solid #4a4a4a;box-shadow:inset 0 1px 0 #a8a8a8;"></div>
<div class="b" style="left:149.0px;top:974.6px;width:127.8px;height:40.4px;background:#1a1a1a;border-radius:4px;box-shadow:inset 0 0 0 1px rgba(0,0,0,.25),0 1px 0 rgba(255,255,255,.12);"></div>
<span class="t" style="left:206.07px;top:1023px;line-height:12px;font-size:11.20px;color:#2a2a2a;font-weight:700;">10</span>
<div class="b" style="left:284.8px;top:968.8px;width:140px;height:69px;background:linear-gradient(#a4a4a4 0%,#909090 7%,#7c7c7c 50%,#626262 100%);border-radius:5px 5px 3px 3px;border:1px solid #8e8e8e;border-bottom:1px solid #4a4a4a;box-shadow:inset 0 1px 0 #a8a8a8;"></div>
<div class="b" style="left:291.0px;top:974.6px;width:127.8px;height:40.4px;background:#333333;border-radius:4px;box-shadow:inset 0 0 0 1px rgba(0,0,0,.25),0 1px 0 rgba(255,255,255,.12);"></div>
<span class="t" style="left:348.07px;top:1023px;line-height:12px;font-size:11.20px;color:#2a2a2a;font-weight:700;">20</span>
<div class="b" style="left:426.8px;top:968.8px;width:140px;height:69px;background:linear-gradient(#a4a4a4 0%,#909090 7%,#7c7c7c 50%,#626262 100%);border-radius:5px 5px 3px 3px;border:1px solid #8e8e8e;border-bottom:1px solid #4a4a4a;box-shadow:inset 0 1px 0 #a8a8a8;"></div>
<div class="b" style="left:433.0px;top:974.6px;width:127.8px;height:40.4px;background:#4d4d4d;border-radius:4px;box-shadow:inset 0 1px 2px rgba(0,0,0,.45),0 1px 0 rgba(255,255,255,.12);"></div>
<span class="t" style="left:490.07px;top:1023px;line-height:12px;font-size:11.20px;color:#2a2a2a;font-weight:700;">30</span>
<div class="b" style="left:568.8px;top:968.8px;width:140px;height:69px;background:linear-gradient(#a4a4a4 0%,#909090 7%,#7c7c7c 50%,#626262 100%);border-radius:5px 5px 3px 3px;border:1px solid #8e8e8e;border-bottom:1px solid #4a4a4a;box-shadow:inset 0 1px 0 #a8a8a8;"></div>
<div class="b" style="left:575.0px;top:974.6px;width:127.8px;height:40.4px;background:#666666;border-radius:4px;box-shadow:inset 0 1px 2px rgba(0,0,0,.45),0 1px 0 rgba(255,255,255,.12);"></div>
<span class="t" style="left:632.07px;top:1023px;line-height:12px;font-size:11.20px;color:#2a2a2a;font-weight:700;">40</span>
<div class="b" style="left:710.8px;top:968.8px;width:140px;height:69px;background:linear-gradient(#a4a4a4 0%,#909090 7%,#7c7c7c 50%,#626262 100%);border-radius:5px 5px 3px 3px;border:1px solid #8e8e8e;border-bottom:1px solid #4a4a4a;box-shadow:inset 0 1px 0 #a8a8a8;"></div>
<div class="b" style="left:717.0px;top:974.6px;width:127.8px;height:40.4px;background:#808080;border-radius:4px;box-shadow:inset 0 1px 2px rgba(0,0,0,.45),0 1px 0 rgba(255,255,255,.12);"></div>
<span class="t" style="left:774.07px;top:1023px;line-height:12px;font-size:11.20px;color:#2a2a2a;font-weight:700;">50</span>
<div class="b" style="left:852.8px;top:968.8px;width:140px;height:69px;background:linear-gradient(#a4a4a4 0%,#909090 7%,#7c7c7c 50%,#626262 100%);border-radius:5px 5px 3px 3px;border:1px solid #8e8e8e;border-bottom:1px solid #4a4a4a;box-shadow:inset 0 1px 0 #a8a8a8;"></div>
<div class="b" style="left:859.0px;top:974.6px;width:127.8px;height:40.4px;background:#999999;border-radius:4px;box-shadow:inset 0 1px 2px rgba(0,0,0,.45),0 1px 0 rgba(255,255,255,.12);"></div>
<span class="t" style="left:916.07px;top:1023px;line-height:12px;font-size:11.20px;color:#2a2a2a;font-weight:700;">60</span>
<div class="b" style="left:994.8px;top:968.8px;width:140px;height:69px;background:linear-gradient(#a4a4a4 0%,#909090 7%,#7c7c7c 50%,#626262 100%);border-radius:5px 5px 3px 3px;border:1px solid #8e8e8e;border-bottom:1px solid #4a4a4a;box-shadow:inset 0 1px 0 #a8a8a8;"></div>
<div class="b" style="left:1001.0px;top:974.6px;width:127.8px;height:40.4px;background:#b3b3b3;border-radius:4px;box-shadow:inset 0 1px 2px rgba(0,0,0,.45),0 1px 0 rgba(255,255,255,.12);"></div>
<span class="t" style="left:1058.07px;top:1023px;line-height:12px;font-size:11.20px;color:#2a2a2a;font-weight:700;">70</span>
<div class="b" style="left:1136.8px;top:968.8px;width:140px;height:69px;background:linear-gradient(#a4a4a4 0%,#909090 7%,#7c7c7c 50%,#626262 100%);border-radius:5px 5px 3px 3px;border:1px solid #8e8e8e;border-bottom:1px solid #4a4a4a;box-shadow:inset 0 1px 0 #a8a8a8;"></div>
<div class="b" style="left:1143.0px;top:974.6px;width:127.8px;height:40.4px;background:#cccccc;border-radius:4px;box-shadow:inset 0 1px 2px rgba(0,0,0,.45),0 1px 0 rgba(255,255,255,.12);"></div>
<span class="t" style="left:1200.07px;top:1023px;line-height:12px;font-size:11.20px;color:#2a2a2a;font-weight:700;">80</span>
<div class="b" style="left:1278.8px;top:968.8px;width:140px;height:69px;background:linear-gradient(#a4a4a4 0%,#909090 7%,#7c7c7c 50%,#626262 100%);border-radius:5px 5px 3px 3px;border:1px solid #8e8e8e;border-bottom:1px solid #4a4a4a;box-shadow:inset 0 1px 0 #a8a8a8;"></div>
<div class="b" style="left:1285.0px;top:974.6px;width:127.8px;height:40.4px;background:#e6e6e6;border-radius:4px;box-shadow:inset 0 1px 2px rgba(0,0,0,.45),0 1px 0 rgba(255,255,255,.12);"></div>
<span class="t" style="left:1342.07px;top:1023px;line-height:12px;font-size:11.20px;color:#2a2a2a;font-weight:700;">90</span>
<div class="b" style="left:1419.8px;top:969px;width:141.5px;height:70px;background:linear-gradient(#1e1e1e,#2a2a2a);border-radius:5px 5px 0 0;"></div>
<div class="b" style="left:1427.0px;top:974.6px;width:127.8px;height:40.4px;background:#ffffff;border-radius:4px;box-shadow:inset 0 1px 2px rgba(0,0,0,.45),0 1px 0 rgba(255,255,255,.12);"></div>
<span class="t" style="left:1480.96px;top:1023px;line-height:12px;font-size:11.20px;color:#fff;font-weight:700;">100</span>
<div class="b" style="left:1563.5px;top:969px;width:54px;height:20.5px;background:linear-gradient(#929292 0%,#7e7e7e 45%,#666666 100%);border:1px solid #8e8e8e;box-shadow:inset 0 1px 0 #a6a6a6;border-radius:5px 5px 0 0;"></div>
<div class="b" style="left:1563.5px;top:990.5px;width:54px;height:49px;background:linear-gradient(#929292 0%,#7e7e7e 45%,#666666 100%);border:1px solid #8e8e8e;box-shadow:inset 0 1px 0 #a6a6a6;"></div>
<div class="b" style="left:1619px;top:969px;width:52px;height:33.5px;background:linear-gradient(#929292 0%,#7e7e7e 45%,#666666 100%);border:1px solid #8e8e8e;box-shadow:inset 0 1px 0 #a6a6a6;border-radius:5px 0 0 0;"></div>
<div class="b" style="left:1672px;top:969px;width:50px;height:33.5px;background:linear-gradient(#929292 0%,#7e7e7e 45%,#666666 100%);border:1px solid #8e8e8e;box-shadow:inset 0 1px 0 #a6a6a6;"></div>
<div class="b" style="left:1723px;top:969px;width:50px;height:33.5px;background:linear-gradient(#929292 0%,#7e7e7e 45%,#666666 100%);border:1px solid #8e8e8e;box-shadow:inset 0 1px 0 #a6a6a6;"></div>
<div class="b" style="left:1774px;top:969px;width:49.5px;height:33.5px;background:linear-gradient(#929292 0%,#7e7e7e 45%,#666666 100%);border:1px solid #8e8e8e;box-shadow:inset 0 1px 0 #a6a6a6;"></div>
<div class="b" style="left:1824.5px;top:969px;width:50.0px;height:33.5px;background:linear-gradient(#929292 0%,#7e7e7e 45%,#666666 100%);border:1px solid #8e8e8e;box-shadow:inset 0 1px 0 #a6a6a6;"></div>
<div class="b" style="left:1875px;top:969px;width:46px;height:33.5px;background:linear-gradient(#2e2e2e,#262626);"></div>
<div class="b" style="left:1619px;top:1004px;width:153.5px;height:36px;background:linear-gradient(#929292 0%,#7e7e7e 45%,#666666 100%);border:1px solid #8e8e8e;box-shadow:inset 0 1px 0 #a6a6a6;"></div>
<div class="b" style="left:1773.5px;top:1004px;width:148px;height:36px;background:linear-gradient(#929292 0%,#7e7e7e 45%,#666666 100%);border:1px solid #8e8e8e;box-shadow:inset 0 1px 0 #a6a6a6;"></div>
<svg width="1920" height="1039"><circle cx="1590.5" cy="978.5" r="8.2" fill="#6e6e6e"/><path d="M1585.6 981.2h9.8l-4.9-5.6z" fill="#2c2c2c"/><rect x="1574" y="997.5" width="33" height="32.5" rx="4.5" fill="#9a9a9a" stroke="#262626" stroke-width="2.4"/><rect x="1575.5" y="1014" width="30" height="15" rx="2" fill="#8a8a8a"/><rect x="1583" y="1006.3" width="15.2" height="15.4" fill="#0c0c0c"/><circle cx="1644.5" cy="986" r="10.8" fill="#8e8e8e"/><circle cx="1644.5" cy="985" r="9.8" fill="#969696"/><circle cx="1696.5" cy="986" r="10.8" fill="#8e8e8e"/><circle cx="1696.5" cy="985" r="9.8" fill="#969696"/><circle cx="1747" cy="986" r="10.8" fill="#8e8e8e"/><circle cx="1747" cy="985" r="9.8" fill="#969696"/><circle cx="1798.2" cy="986" r="10.8" fill="#8e8e8e"/><circle cx="1798.2" cy="985" r="9.8" fill="#969696"/><circle cx="1848.8" cy="986" r="10.8" fill="#8e8e8e"/><circle cx="1848.8" cy="985" r="9.8" fill="#969696"/><circle cx="1900.5" cy="986" r="10.6" fill="#3a3a3a"/><rect x="1640.2" y="981.7" width="8.6" height="8.6" fill="#303030"/><path d="M1692.8 979.6v12.8l9.6-6.4z" fill="#303030"/><g stroke="#303030" stroke-width="1.7" fill="none"><path d="M1744 980.5h-2.6v11h2.6M1750 980.5h2.6v11h-2.6"/></g><circle cx="1745.2" cy="986" r="0.9" fill="#303030"/><circle cx="1748.8" cy="986" r="0.9" fill="#303030"/><path d="M1798.2 986c-1.6-2.6-3-3.6-4.6-3.6a3.3 3.3 0 0 0 0 6.6c1.6 0 3-1 4.6-3.6c1.6 2.6 3 3.6 4.6 3.6a3.3 3.3 0 0 0 0-6.6c-1.6 0-3 1-4.6 3.6z" fill="none" stroke="#303030" stroke-width="1.8"/><g fill="none" stroke="#303030" stroke-width="2"><path d="M1843.6 984.6a5.4 5.4 0 0 1 9.4-2.2"/><path d="M1854 987.4a5.4 5.4 0 0 1-9.4 2.2"/></g><path d="M1854.6 979.4v4.6h-4.6z M1843 992.6v-4.6h4.6z" fill="#303030"/><circle cx="1653.5" cy="1021.3" r="11" fill="#8e8e8e"/><circle cx="1653.5" cy="1020.3" r="10" fill="#969696"/><circle cx="1895" cy="1021.3" r="11" fill="#8e8e8e"/><circle cx="1895" cy="1020.3" r="10" fill="#969696"/><g fill="none" stroke="#3a3a3a" stroke-width="1.8"><path d="M1653 1016.2l-4.2 5 4.2 5M1658 1016.2l-4.2 5 4.2 5"/><path d="M1890.8 1016.2l4.2 5-4.2 5M1895.8 1016.2l4.2 5-4.2 5"/></g></svg>
<span class="t" style="left:1684.00px;top:1007px;line-height:27px;font-size:23.77px;color:#333;letter-spacing:-0.010px;font-weight:700;text-shadow:0 1px 0 rgba(255,255,255,.25);">Back</span>
<span class="t" style="left:1804.80px;top:1006px;line-height:28px;font-size:25.47px;color:#333;letter-spacing:0.867px;font-weight:700;text-shadow:0 1px 0 rgba(255,255,255,.25);">Next</span>
</body></html>
